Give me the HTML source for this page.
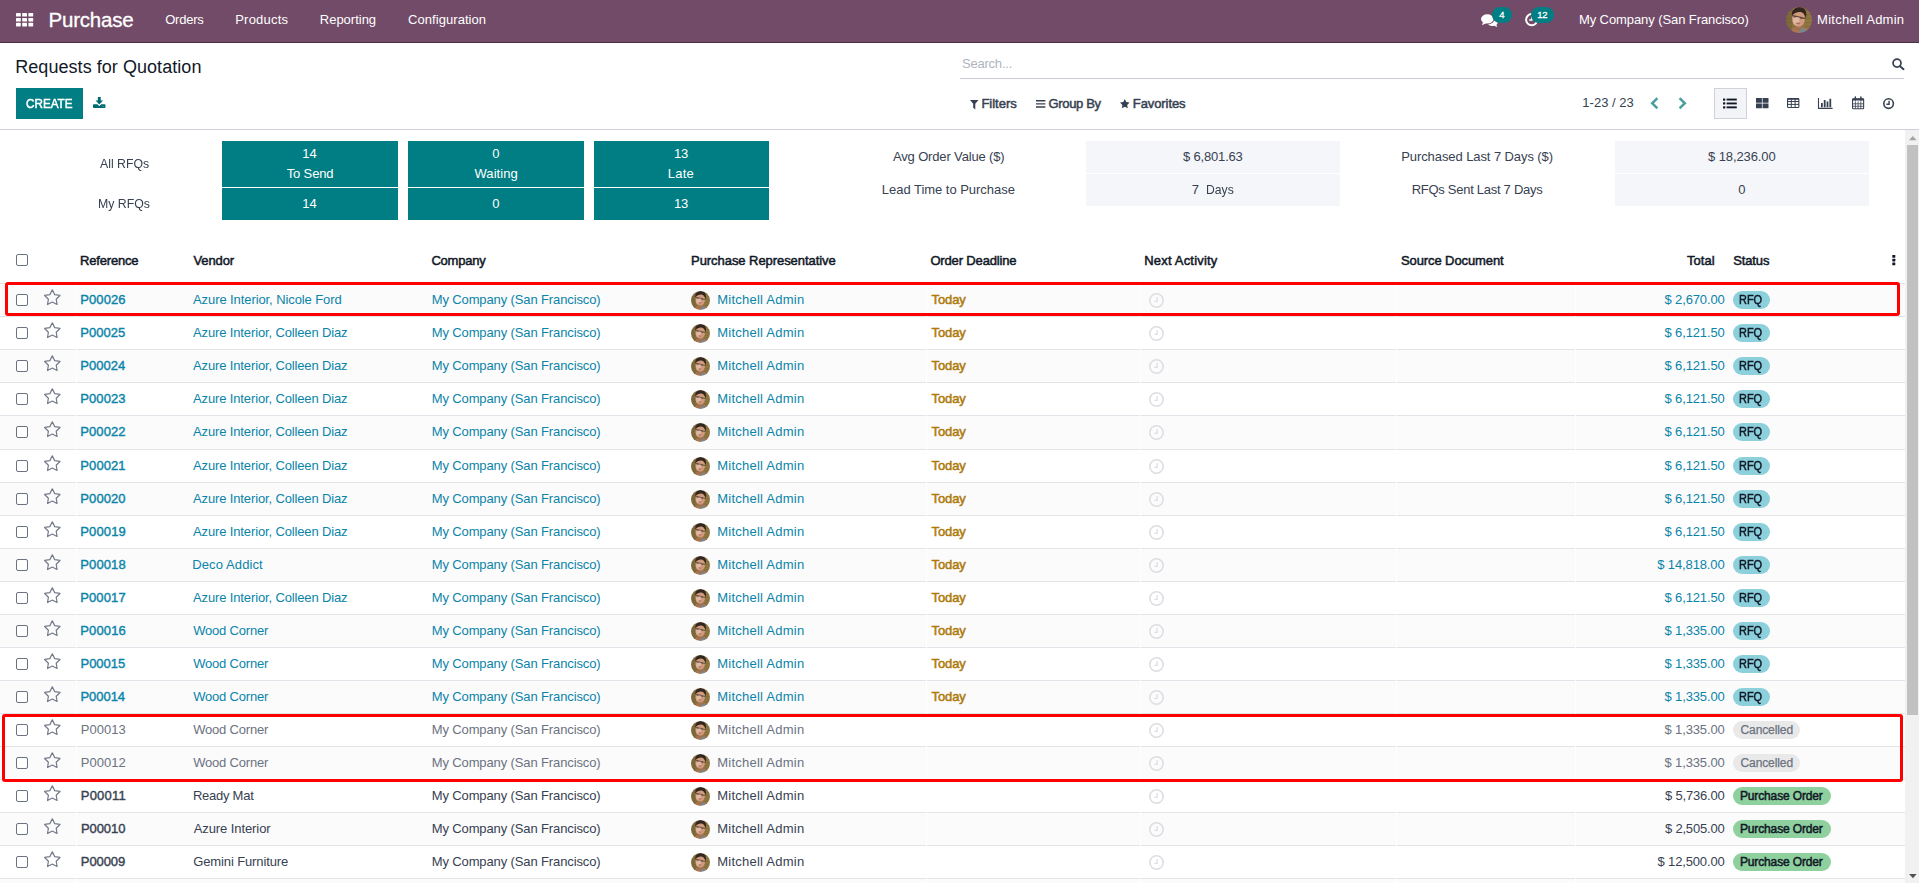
<!DOCTYPE html>
<html lang="en"><head><meta charset="utf-8"><title>Requests for Quotation - Purchase</title>
<style>
html,body{margin:0;padding:0;background:#fff;}
body{width:1919px;height:883px;position:relative;overflow:hidden;font-family:"Liberation Sans", sans-serif;}
.t{position:absolute;white-space:pre;display:block;}
svg{display:block;overflow:visible;}
</style></head><body>
<div style="position:absolute;left:0px;top:0px;width:1919px;height:42px;background:#714b67;"></div>
<div style="position:absolute;left:0px;top:42px;width:1919px;height:1px;background:#4f2e47;"></div>
<svg style="position:absolute;left:16px;top:13.3px;" width="17.2" height="13.4" viewBox="0 0 17.2 13.4"><rect x="0.0" y="0.0" width="4.8" height="3.6" rx="0.6" fill="#fff"/><rect x="6.2" y="0.0" width="4.8" height="3.6" rx="0.6" fill="#fff"/><rect x="12.4" y="0.0" width="4.8" height="3.6" rx="0.6" fill="#fff"/><rect x="0.0" y="4.9" width="4.8" height="3.6" rx="0.6" fill="#fff"/><rect x="6.2" y="4.9" width="4.8" height="3.6" rx="0.6" fill="#fff"/><rect x="12.4" y="4.9" width="4.8" height="3.6" rx="0.6" fill="#fff"/><rect x="0.0" y="9.8" width="4.8" height="3.6" rx="0.6" fill="#fff"/><rect x="6.2" y="9.8" width="4.8" height="3.6" rx="0.6" fill="#fff"/><rect x="12.4" y="9.8" width="4.8" height="3.6" rx="0.6" fill="#fff"/></svg>
<svg style="position:absolute;left:1481px;top:13.5px;" width="17" height="13" viewBox="0 0 17 13"><ellipse cx="6.3" cy="4.9" rx="6.3" ry="4.6" fill="#fff"/><path d="M2 8 L1 11.2 L5.5 9z" fill="#fff"/><path d="M13.5 4.2c2 .7 3.4 2.2 3.4 3.9 0 1.1-.6 2.1-1.5 2.9l.9 2-3-1.200c-.6.100-1.200.200-1.800.200-1.900 0-3.500-.700-4.500-1.800 3.700-.200 6.600-2.500 6.600-5.300 0-.200 0-.500-.100-.700z" fill="#fff"/></svg>
<div style="position:absolute;left:1492.1px;top:6.7px;width:20.2px;height:16.4px;background:#017e84;border-radius:8.2px;"></div>
<svg style="position:absolute;left:1524.5px;top:13px;" width="13.4" height="13.4" viewBox="0 0 13.4 13.4"><circle cx="6.7" cy="6.7" r="5.6" fill="none" stroke="#fff" stroke-width="2"/><path d="M6.9 3.4v3.6H4.200" fill="none" stroke="#fff" stroke-width="1.5"/></svg>
<div style="position:absolute;left:1531.3px;top:6.7px;width:23px;height:16.4px;background:#017e84;border-radius:8.2px;"></div>
<div style="position:absolute;left:1786px;top:7px;width:26px;height:26px;border-radius:50%;overflow:hidden;"><svg width="26" height="26" viewBox="0 0 26 26" style="filter:blur(0.5px)"><rect width="26" height="26" fill="#8f7540"/><path d="M0 3.500h26M0 7.500h26M0 11.500h26M0 15.500h26M0 19.500h26M0 23.500h26" stroke="#7a6334" stroke-width="1.100" opacity=".5"/><path d="M0 0h7l-1 26H0z" fill="#6b5a33" opacity=".45"/><path d="M5 26c0-3.500 2-5.500 5-6.500l6-.500c4 1 6.500 3 7.500 7z" fill="#a87452"/><path d="M13 26l1.500-5.500c4 .500 7 2 8.500 5.500z" fill="#7b8788"/><ellipse cx="12.500" cy="11.800" rx="6.500" ry="8" fill="#cf9b7c"/><ellipse cx="10.300" cy="13.500" rx="3.200" ry="4.200" fill="#e8c9b4" opacity=".65"/><path d="M8 19.500c2.500 2.300 6.500 2.300 9-.300l-.500 2.500c-2.500 1.500-5.500 1.500-8 0z" fill="#9b6a4c" opacity=".6"/><path d="M6 8.500c-.800-5.500 3.500-8.800 8.500-8.300 5.200.500 6.800 5.300 5.300 11.300-.600-3.300-1.800-5.500-4.300-6.300-3.300-.900-7 .300-9.500 3.300z" fill="#33251f"/><path d="M6.300 8.600l6.200 1.200 6.600 1.800" fill="none" stroke="#3a2d2b" stroke-width="1.100" opacity=".8"/><ellipse cx="9" cy="9.800" rx="1.400" ry=".9" fill="#4a3a36" opacity=".6"/><ellipse cx="15.300" cy="11.200" rx="1.400" ry=".9" fill="#4a3a36" opacity=".6"/><ellipse cx="12" cy="16.300" rx="2.300" ry=".9" fill="#b76c6e"/></svg></div>
<div style="position:absolute;left:16px;top:88px;width:67px;height:31px;background:#017e84;"></div>
<svg style="position:absolute;left:93.1px;top:96.9px;" width="12.5" height="11" viewBox="0 0 12.500 11"><rect x="0" y="7.200" width="12.500" height="3.800" rx=".9" fill="#016b72"/><path d="M2.200 3.400h8.200L6.300 8.300z" fill="#fff" stroke="#fff" stroke-width="1.300" stroke-linejoin="round"/><path d="M4.850 0h2.900v3.400h2.300L6.300 7.400 2.550 3.400h2.300z" fill="#016b72"/><circle cx="9.500" cy="9.650" r=".45" fill="#8fd0d3"/><circle cx="10.900" cy="9.650" r=".45" fill="#8fd0d3"/></svg>
<div style="position:absolute;left:960px;top:78px;width:944px;height:1px;background:#c9ccd3;"></div>
<svg style="position:absolute;left:1892px;top:57.9px;" width="12.5" height="12" viewBox="0 0 12.5 12"><circle cx="5" cy="5.100" r="4" fill="none" stroke="#374151" stroke-width="1.700"/><path d="M8 8.200l3.500 3" stroke="#374151" stroke-width="2" stroke-linecap="round"/></svg>
<svg style="position:absolute;left:970px;top:100px;" width="8.5" height="9.5" viewBox="0 0 8.5 9.5"><path d="M0 0h8.500L5.300 3.800v5.700L3.200 7.800v-4z" fill="#374151"/></svg>
<svg style="position:absolute;left:1036.3px;top:100.3px;" width="9.4" height="8" viewBox="0 0 9.400 8"><path d="M0 .1h9.400v1.400H0zM0 3.200h9.400v1.400H0zM0 6.300h9.400v1.400H0z" fill="#374151"/></svg>
<svg style="position:absolute;left:1120.3px;top:99.3px;" width="9.6" height="9.2" viewBox="0 0 9.600 9.200"><path d="M4.800 0l1.480 3.050 3.320.480-2.400 2.370.570 3.300L4.800 7.640 1.830 9.200l.570-3.300L0 3.530l3.320-.48z" fill="#374151"/></svg>
<svg style="position:absolute;left:1650.3px;top:96.5px;" width="9" height="12.5" viewBox="0 0 9 12.5"><path d="M7.400 1.200L2.200 6.250l5.200 5.050" fill="none" stroke="#4b9da0" stroke-width="2.500"/></svg>
<svg style="position:absolute;left:1678px;top:96.5px;" width="9" height="12.5" viewBox="0 0 9 12.5"><path d="M1.600 1.200L6.800 6.250 1.600 11.300" fill="none" stroke="#4b9da0" stroke-width="2.500"/></svg>
<div style="position:absolute;left:1714px;top:88px;width:33px;height:31px;background:#f3f4f8;border:1px solid #cfd2d8;box-sizing:border-box;"></div>
<svg style="position:absolute;left:1723.3px;top:98.1px;" width="13.8" height="10.6" viewBox="0 0 13.800 10.600"><rect x="0" y="0.4" width="2.300" height="2.300" rx="0.600" fill="#111827"/><rect x="3.600" y="0.6" width="10.200" height="1.900" fill="#111827"/><rect x="0" y="4.3" width="2.300" height="2.300" rx="0.600" fill="#111827"/><rect x="3.600" y="4.5" width="10.200" height="1.900" fill="#111827"/><rect x="0" y="8.2" width="2.300" height="2.300" rx="0.600" fill="#111827"/><rect x="3.600" y="8.4" width="10.200" height="1.900" fill="#111827"/></svg>
<svg style="position:absolute;left:1755.5px;top:97.7px;" width="12.5" height="10.2" viewBox="0 0 12.500 10.200"><path d="M0 0h5.900v4.800H0zM6.600 0h5.900v4.800H6.600zM0 5.400h5.900v4.800H0zM6.600 5.400h5.900v4.800H6.600z" fill="#374151"/></svg>
<svg style="position:absolute;left:1786.7px;top:97.9px;" width="12.4" height="10" viewBox="0 0 12.400 10"><rect x=".55" y=".55" width="11.300" height="8.900" rx=".8" fill="none" stroke="#374151" stroke-width="1.100"/><path d="M.5 3.500h11.400M.5 6.400h11.400M4.300 1v8.500M8.100 1v8.500" stroke="#374151" stroke-width="1" fill="none"/><rect x=".5" y=".5" width="11.400" height="1.300" fill="#374151"/></svg>
<svg style="position:absolute;left:1818.2px;top:98px;" width="14.6" height="11" viewBox="0 0 14.600 11"><path d="M.5 0v10.400h14.100" fill="none" stroke="#374151" stroke-width="1.100"/><path d="M3 5h1.800v4.300H3zM5.800 1.900h1.800v7.400H5.800zM8.600 3.500h1.800v5.800H8.600zM11.400 .800h1.800v8.500h-1.800z" fill="#374151"/></svg>
<svg style="position:absolute;left:1851.9px;top:97.3px;" width="12.2" height="12.3" viewBox="0 0 12.200 12.300"><rect x=".55" y="1.700" width="11.100" height="10" rx=".7" fill="none" stroke="#374151" stroke-width="1.100"/><rect x=".5" y="1.700" width="11.200" height="1.800" fill="#374151"/><path d="M3.300 0v3M8.900 0v3" stroke="#374151" stroke-width="1.500" stroke-linecap="round"/><path d="M.5 6.800h11.200M.5 9.300h11.200M3.400 4.300v7.400M6.100 4.300v7.400M8.800 4.300v7.400" stroke="#374151" stroke-width=".8"/></svg>
<svg style="position:absolute;left:1882.6px;top:97.7px;" width="11.2" height="11.2" viewBox="0 0 11.200 11.200"><circle cx="5.600" cy="5.600" r="4.800" fill="none" stroke="#374151" stroke-width="1.600"/><path d="M6.100 2.800v3.400H3.400" fill="none" stroke="#374151" stroke-width="1.400"/></svg>
<div style="position:absolute;left:0px;top:129px;width:1919px;height:1px;background:#ced1d8;"></div>
<div style="position:absolute;left:222px;top:141px;width:176px;height:46px;background:#017e84;"></div>
<div style="position:absolute;left:222px;top:188px;width:176px;height:32px;background:#017e84;"></div>
<div style="position:absolute;left:408px;top:141px;width:176px;height:46px;background:#017e84;"></div>
<div style="position:absolute;left:408px;top:188px;width:176px;height:32px;background:#017e84;"></div>
<div style="position:absolute;left:594px;top:141px;width:175px;height:46px;background:#017e84;"></div>
<div style="position:absolute;left:594px;top:188px;width:175px;height:32px;background:#017e84;"></div>
<div style="position:absolute;left:1086px;top:141px;width:254px;height:32px;background:#f5f6fa;"></div>
<div style="position:absolute;left:1086px;top:174px;width:254px;height:32px;background:#f5f6fa;"></div>
<div style="position:absolute;left:1615px;top:141px;width:254px;height:32px;background:#f5f6fa;"></div>
<div style="position:absolute;left:1615px;top:174px;width:254px;height:32px;background:#f5f6fa;"></div>
<div style="position:absolute;left:16px;top:254px;width:12px;height:12px;box-sizing:border-box;border:1px solid #6b7280;border-radius:2px;background:#fff;"></div>
<svg style="position:absolute;left:1892px;top:255.3px;" width="3.6" height="10.2" viewBox="0 0 3.600 10.200"><rect x=".3" y="0" width="3" height="2.700" rx=".5" fill="#111827"/><rect x=".3" y="3.750" width="3" height="2.700" rx=".5" fill="#111827"/><rect x=".3" y="7.500" width="3" height="2.700" rx=".5" fill="#111827"/></svg>
<div style="position:absolute;left:0px;top:283px;width:1905px;height:1px;background:#e2e4e9;"></div>
<div style="position:absolute;left:0px;top:284px;width:1905px;height:32px;background:#fbfbfc;"></div>
<div style="position:absolute;left:16px;top:294px;width:12px;height:12px;box-sizing:border-box;border:1px solid #6b7280;border-radius:2px;background:#fff;"></div>
<svg style="position:absolute;left:42px;top:287.2px;" width="20" height="20" viewBox="0 0 20 20"><path d="M10.30 2.85L12.71 7.63L18.00 8.45L14.20 12.22L15.06 17.50L10.30 15.05L5.54 17.50L6.40 12.22L2.60 8.45L7.89 7.63z" fill="none" stroke="#737a88" stroke-width="1.200" stroke-linejoin="round"/></svg>
<div style="position:absolute;left:690.8px;top:290.9px;width:19.2px;height:19.2px;border-radius:50%;overflow:hidden;"><svg width="19.2" height="19.2" viewBox="0 0 26 26" style="filter:blur(0.35px)"><rect width="26" height="26" fill="#8f7540"/><path d="M0 3.500h26M0 7.500h26M0 11.500h26M0 15.500h26M0 19.500h26M0 23.500h26" stroke="#7a6334" stroke-width="1.100" opacity=".5"/><path d="M0 0h7l-1 26H0z" fill="#6b5a33" opacity=".45"/><path d="M5 26c0-3.500 2-5.500 5-6.500l6-.500c4 1 6.500 3 7.500 7z" fill="#a87452"/><path d="M13 26l1.500-5.500c4 .500 7 2 8.500 5.500z" fill="#7b8788"/><ellipse cx="12.500" cy="11.800" rx="6.500" ry="8" fill="#cf9b7c"/><ellipse cx="10.300" cy="13.500" rx="3.200" ry="4.200" fill="#e8c9b4" opacity=".65"/><path d="M8 19.500c2.500 2.300 6.500 2.300 9-.300l-.500 2.500c-2.500 1.500-5.500 1.500-8 0z" fill="#9b6a4c" opacity=".6"/><path d="M6 8.500c-.800-5.500 3.500-8.800 8.500-8.300 5.200.500 6.800 5.300 5.300 11.300-.600-3.300-1.800-5.500-4.300-6.300-3.300-.900-7 .300-9.500 3.300z" fill="#33251f"/><path d="M6.300 8.600l6.200 1.200 6.600 1.800" fill="none" stroke="#3a2d2b" stroke-width="1.100" opacity=".8"/><ellipse cx="9" cy="9.800" rx="1.400" ry=".9" fill="#4a3a36" opacity=".6"/><ellipse cx="15.300" cy="11.200" rx="1.400" ry=".9" fill="#4a3a36" opacity=".6"/><ellipse cx="12" cy="16.300" rx="2.300" ry=".9" fill="#b76c6e"/></svg></div>
<svg style="position:absolute;left:1148.7px;top:293.2px;" width="15" height="15" viewBox="0 0 15 15"><circle cx="7.500" cy="7.500" r="6.700" fill="none" stroke="#dcdee3" stroke-width="1.600"/><path d="M8.100 4v4.300H5.400" fill="none" stroke="#dcdee3" stroke-width="1.300"/></svg>
<div style="position:absolute;left:1733px;top:291px;width:37px;height:18px;background:#8bd0db;border-radius:9px;"></div>
<div style="position:absolute;left:0px;top:316px;width:1905px;height:1px;background:#e2e4e9;"></div>
<div style="position:absolute;left:0px;top:317px;width:1905px;height:32px;background:#fff;"></div>
<div style="position:absolute;left:16px;top:327px;width:12px;height:12px;box-sizing:border-box;border:1px solid #6b7280;border-radius:2px;background:#fff;"></div>
<svg style="position:absolute;left:42px;top:320.2px;" width="20" height="20" viewBox="0 0 20 20"><path d="M10.30 2.85L12.71 7.63L18.00 8.45L14.20 12.22L15.06 17.50L10.30 15.05L5.54 17.50L6.40 12.22L2.60 8.45L7.89 7.63z" fill="none" stroke="#737a88" stroke-width="1.200" stroke-linejoin="round"/></svg>
<div style="position:absolute;left:690.8px;top:323.9px;width:19.2px;height:19.2px;border-radius:50%;overflow:hidden;"><svg width="19.2" height="19.2" viewBox="0 0 26 26" style="filter:blur(0.35px)"><rect width="26" height="26" fill="#8f7540"/><path d="M0 3.500h26M0 7.500h26M0 11.500h26M0 15.500h26M0 19.500h26M0 23.500h26" stroke="#7a6334" stroke-width="1.100" opacity=".5"/><path d="M0 0h7l-1 26H0z" fill="#6b5a33" opacity=".45"/><path d="M5 26c0-3.500 2-5.500 5-6.500l6-.500c4 1 6.500 3 7.500 7z" fill="#a87452"/><path d="M13 26l1.500-5.500c4 .500 7 2 8.500 5.500z" fill="#7b8788"/><ellipse cx="12.500" cy="11.800" rx="6.500" ry="8" fill="#cf9b7c"/><ellipse cx="10.300" cy="13.500" rx="3.200" ry="4.200" fill="#e8c9b4" opacity=".65"/><path d="M8 19.500c2.500 2.300 6.500 2.300 9-.300l-.500 2.500c-2.500 1.500-5.500 1.500-8 0z" fill="#9b6a4c" opacity=".6"/><path d="M6 8.500c-.800-5.500 3.500-8.800 8.500-8.300 5.200.500 6.800 5.300 5.300 11.300-.600-3.300-1.800-5.500-4.300-6.300-3.300-.900-7 .300-9.500 3.300z" fill="#33251f"/><path d="M6.300 8.600l6.200 1.200 6.600 1.800" fill="none" stroke="#3a2d2b" stroke-width="1.100" opacity=".8"/><ellipse cx="9" cy="9.800" rx="1.400" ry=".9" fill="#4a3a36" opacity=".6"/><ellipse cx="15.300" cy="11.200" rx="1.400" ry=".9" fill="#4a3a36" opacity=".6"/><ellipse cx="12" cy="16.300" rx="2.300" ry=".9" fill="#b76c6e"/></svg></div>
<svg style="position:absolute;left:1148.7px;top:326.2px;" width="15" height="15" viewBox="0 0 15 15"><circle cx="7.500" cy="7.500" r="6.700" fill="none" stroke="#dcdee3" stroke-width="1.600"/><path d="M8.100 4v4.300H5.400" fill="none" stroke="#dcdee3" stroke-width="1.300"/></svg>
<div style="position:absolute;left:1733px;top:324px;width:37px;height:18px;background:#8bd0db;border-radius:9px;"></div>
<div style="position:absolute;left:0px;top:349px;width:1905px;height:1px;background:#e2e4e9;"></div>
<div style="position:absolute;left:0px;top:350px;width:1905px;height:32px;background:#fbfbfc;"></div>
<div style="position:absolute;left:16px;top:360px;width:12px;height:12px;box-sizing:border-box;border:1px solid #6b7280;border-radius:2px;background:#fff;"></div>
<svg style="position:absolute;left:42px;top:353.2px;" width="20" height="20" viewBox="0 0 20 20"><path d="M10.30 2.85L12.71 7.63L18.00 8.45L14.20 12.22L15.06 17.50L10.30 15.05L5.54 17.50L6.40 12.22L2.60 8.45L7.89 7.63z" fill="none" stroke="#737a88" stroke-width="1.200" stroke-linejoin="round"/></svg>
<div style="position:absolute;left:690.8px;top:356.9px;width:19.2px;height:19.2px;border-radius:50%;overflow:hidden;"><svg width="19.2" height="19.2" viewBox="0 0 26 26" style="filter:blur(0.35px)"><rect width="26" height="26" fill="#8f7540"/><path d="M0 3.500h26M0 7.500h26M0 11.500h26M0 15.500h26M0 19.500h26M0 23.500h26" stroke="#7a6334" stroke-width="1.100" opacity=".5"/><path d="M0 0h7l-1 26H0z" fill="#6b5a33" opacity=".45"/><path d="M5 26c0-3.500 2-5.500 5-6.500l6-.500c4 1 6.500 3 7.500 7z" fill="#a87452"/><path d="M13 26l1.500-5.500c4 .500 7 2 8.500 5.500z" fill="#7b8788"/><ellipse cx="12.500" cy="11.800" rx="6.500" ry="8" fill="#cf9b7c"/><ellipse cx="10.300" cy="13.500" rx="3.200" ry="4.200" fill="#e8c9b4" opacity=".65"/><path d="M8 19.500c2.500 2.300 6.500 2.300 9-.300l-.500 2.500c-2.500 1.500-5.500 1.500-8 0z" fill="#9b6a4c" opacity=".6"/><path d="M6 8.500c-.800-5.500 3.500-8.800 8.500-8.300 5.200.500 6.800 5.300 5.300 11.300-.600-3.300-1.800-5.500-4.300-6.300-3.300-.900-7 .300-9.500 3.300z" fill="#33251f"/><path d="M6.300 8.600l6.200 1.200 6.600 1.800" fill="none" stroke="#3a2d2b" stroke-width="1.100" opacity=".8"/><ellipse cx="9" cy="9.800" rx="1.400" ry=".9" fill="#4a3a36" opacity=".6"/><ellipse cx="15.300" cy="11.200" rx="1.400" ry=".9" fill="#4a3a36" opacity=".6"/><ellipse cx="12" cy="16.300" rx="2.300" ry=".9" fill="#b76c6e"/></svg></div>
<svg style="position:absolute;left:1148.7px;top:359.2px;" width="15" height="15" viewBox="0 0 15 15"><circle cx="7.500" cy="7.500" r="6.700" fill="none" stroke="#dcdee3" stroke-width="1.600"/><path d="M8.100 4v4.300H5.400" fill="none" stroke="#dcdee3" stroke-width="1.300"/></svg>
<div style="position:absolute;left:1733px;top:357px;width:37px;height:18px;background:#8bd0db;border-radius:9px;"></div>
<div style="position:absolute;left:0px;top:382px;width:1905px;height:1px;background:#e2e4e9;"></div>
<div style="position:absolute;left:0px;top:383px;width:1905px;height:32px;background:#fff;"></div>
<div style="position:absolute;left:16px;top:393px;width:12px;height:12px;box-sizing:border-box;border:1px solid #6b7280;border-radius:2px;background:#fff;"></div>
<svg style="position:absolute;left:42px;top:386.2px;" width="20" height="20" viewBox="0 0 20 20"><path d="M10.30 2.85L12.71 7.63L18.00 8.45L14.20 12.22L15.06 17.50L10.30 15.05L5.54 17.50L6.40 12.22L2.60 8.45L7.89 7.63z" fill="none" stroke="#737a88" stroke-width="1.200" stroke-linejoin="round"/></svg>
<div style="position:absolute;left:690.8px;top:389.9px;width:19.2px;height:19.2px;border-radius:50%;overflow:hidden;"><svg width="19.2" height="19.2" viewBox="0 0 26 26" style="filter:blur(0.35px)"><rect width="26" height="26" fill="#8f7540"/><path d="M0 3.500h26M0 7.500h26M0 11.500h26M0 15.500h26M0 19.500h26M0 23.500h26" stroke="#7a6334" stroke-width="1.100" opacity=".5"/><path d="M0 0h7l-1 26H0z" fill="#6b5a33" opacity=".45"/><path d="M5 26c0-3.500 2-5.500 5-6.500l6-.500c4 1 6.500 3 7.500 7z" fill="#a87452"/><path d="M13 26l1.500-5.500c4 .500 7 2 8.500 5.500z" fill="#7b8788"/><ellipse cx="12.500" cy="11.800" rx="6.500" ry="8" fill="#cf9b7c"/><ellipse cx="10.300" cy="13.500" rx="3.200" ry="4.200" fill="#e8c9b4" opacity=".65"/><path d="M8 19.500c2.500 2.300 6.500 2.300 9-.300l-.500 2.500c-2.500 1.500-5.500 1.500-8 0z" fill="#9b6a4c" opacity=".6"/><path d="M6 8.500c-.800-5.500 3.500-8.800 8.500-8.300 5.200.500 6.800 5.300 5.300 11.300-.600-3.300-1.800-5.500-4.300-6.300-3.300-.900-7 .300-9.500 3.300z" fill="#33251f"/><path d="M6.300 8.600l6.200 1.200 6.600 1.800" fill="none" stroke="#3a2d2b" stroke-width="1.100" opacity=".8"/><ellipse cx="9" cy="9.800" rx="1.400" ry=".9" fill="#4a3a36" opacity=".6"/><ellipse cx="15.300" cy="11.200" rx="1.400" ry=".9" fill="#4a3a36" opacity=".6"/><ellipse cx="12" cy="16.300" rx="2.300" ry=".9" fill="#b76c6e"/></svg></div>
<svg style="position:absolute;left:1148.7px;top:392.2px;" width="15" height="15" viewBox="0 0 15 15"><circle cx="7.500" cy="7.500" r="6.700" fill="none" stroke="#dcdee3" stroke-width="1.600"/><path d="M8.100 4v4.300H5.400" fill="none" stroke="#dcdee3" stroke-width="1.300"/></svg>
<div style="position:absolute;left:1733px;top:390px;width:37px;height:18px;background:#8bd0db;border-radius:9px;"></div>
<div style="position:absolute;left:0px;top:415px;width:1905px;height:1px;background:#e2e4e9;"></div>
<div style="position:absolute;left:0px;top:416px;width:1905px;height:33px;background:#fbfbfc;"></div>
<div style="position:absolute;left:16px;top:426px;width:12px;height:12px;box-sizing:border-box;border:1px solid #6b7280;border-radius:2px;background:#fff;"></div>
<svg style="position:absolute;left:42px;top:419.2px;" width="20" height="20" viewBox="0 0 20 20"><path d="M10.30 2.85L12.71 7.63L18.00 8.45L14.20 12.22L15.06 17.50L10.30 15.05L5.54 17.50L6.40 12.22L2.60 8.45L7.89 7.63z" fill="none" stroke="#737a88" stroke-width="1.200" stroke-linejoin="round"/></svg>
<div style="position:absolute;left:690.8px;top:422.9px;width:19.2px;height:19.2px;border-radius:50%;overflow:hidden;"><svg width="19.2" height="19.2" viewBox="0 0 26 26" style="filter:blur(0.35px)"><rect width="26" height="26" fill="#8f7540"/><path d="M0 3.500h26M0 7.500h26M0 11.500h26M0 15.500h26M0 19.500h26M0 23.500h26" stroke="#7a6334" stroke-width="1.100" opacity=".5"/><path d="M0 0h7l-1 26H0z" fill="#6b5a33" opacity=".45"/><path d="M5 26c0-3.500 2-5.500 5-6.500l6-.500c4 1 6.500 3 7.500 7z" fill="#a87452"/><path d="M13 26l1.500-5.500c4 .500 7 2 8.500 5.500z" fill="#7b8788"/><ellipse cx="12.500" cy="11.800" rx="6.500" ry="8" fill="#cf9b7c"/><ellipse cx="10.300" cy="13.500" rx="3.200" ry="4.200" fill="#e8c9b4" opacity=".65"/><path d="M8 19.500c2.500 2.300 6.500 2.300 9-.300l-.500 2.500c-2.500 1.500-5.500 1.500-8 0z" fill="#9b6a4c" opacity=".6"/><path d="M6 8.500c-.800-5.500 3.500-8.800 8.500-8.300 5.200.500 6.800 5.300 5.300 11.300-.600-3.300-1.800-5.500-4.300-6.300-3.300-.900-7 .300-9.500 3.300z" fill="#33251f"/><path d="M6.300 8.600l6.200 1.200 6.600 1.800" fill="none" stroke="#3a2d2b" stroke-width="1.100" opacity=".8"/><ellipse cx="9" cy="9.800" rx="1.400" ry=".9" fill="#4a3a36" opacity=".6"/><ellipse cx="15.300" cy="11.200" rx="1.400" ry=".9" fill="#4a3a36" opacity=".6"/><ellipse cx="12" cy="16.300" rx="2.300" ry=".9" fill="#b76c6e"/></svg></div>
<svg style="position:absolute;left:1148.7px;top:425.2px;" width="15" height="15" viewBox="0 0 15 15"><circle cx="7.500" cy="7.500" r="6.700" fill="none" stroke="#dcdee3" stroke-width="1.600"/><path d="M8.100 4v4.300H5.400" fill="none" stroke="#dcdee3" stroke-width="1.300"/></svg>
<div style="position:absolute;left:1733px;top:423px;width:37px;height:18px;background:#8bd0db;border-radius:9px;"></div>
<div style="position:absolute;left:0px;top:449px;width:1905px;height:1px;background:#e2e4e9;"></div>
<div style="position:absolute;left:0px;top:450px;width:1905px;height:32px;background:#fff;"></div>
<div style="position:absolute;left:16px;top:460px;width:12px;height:12px;box-sizing:border-box;border:1px solid #6b7280;border-radius:2px;background:#fff;"></div>
<svg style="position:absolute;left:42px;top:453.2px;" width="20" height="20" viewBox="0 0 20 20"><path d="M10.30 2.85L12.71 7.63L18.00 8.45L14.20 12.22L15.06 17.50L10.30 15.05L5.54 17.50L6.40 12.22L2.60 8.45L7.89 7.63z" fill="none" stroke="#737a88" stroke-width="1.200" stroke-linejoin="round"/></svg>
<div style="position:absolute;left:690.8px;top:456.9px;width:19.2px;height:19.2px;border-radius:50%;overflow:hidden;"><svg width="19.2" height="19.2" viewBox="0 0 26 26" style="filter:blur(0.35px)"><rect width="26" height="26" fill="#8f7540"/><path d="M0 3.500h26M0 7.500h26M0 11.500h26M0 15.500h26M0 19.500h26M0 23.500h26" stroke="#7a6334" stroke-width="1.100" opacity=".5"/><path d="M0 0h7l-1 26H0z" fill="#6b5a33" opacity=".45"/><path d="M5 26c0-3.500 2-5.500 5-6.500l6-.500c4 1 6.500 3 7.500 7z" fill="#a87452"/><path d="M13 26l1.500-5.500c4 .500 7 2 8.500 5.500z" fill="#7b8788"/><ellipse cx="12.500" cy="11.800" rx="6.500" ry="8" fill="#cf9b7c"/><ellipse cx="10.300" cy="13.500" rx="3.200" ry="4.200" fill="#e8c9b4" opacity=".65"/><path d="M8 19.500c2.500 2.300 6.500 2.300 9-.300l-.500 2.500c-2.500 1.500-5.500 1.500-8 0z" fill="#9b6a4c" opacity=".6"/><path d="M6 8.500c-.800-5.500 3.500-8.800 8.500-8.300 5.200.500 6.800 5.300 5.300 11.300-.600-3.300-1.800-5.500-4.300-6.300-3.300-.900-7 .300-9.500 3.300z" fill="#33251f"/><path d="M6.300 8.600l6.200 1.200 6.600 1.800" fill="none" stroke="#3a2d2b" stroke-width="1.100" opacity=".8"/><ellipse cx="9" cy="9.800" rx="1.400" ry=".9" fill="#4a3a36" opacity=".6"/><ellipse cx="15.300" cy="11.200" rx="1.400" ry=".9" fill="#4a3a36" opacity=".6"/><ellipse cx="12" cy="16.300" rx="2.300" ry=".9" fill="#b76c6e"/></svg></div>
<svg style="position:absolute;left:1148.7px;top:459.2px;" width="15" height="15" viewBox="0 0 15 15"><circle cx="7.500" cy="7.500" r="6.700" fill="none" stroke="#dcdee3" stroke-width="1.600"/><path d="M8.100 4v4.300H5.400" fill="none" stroke="#dcdee3" stroke-width="1.300"/></svg>
<div style="position:absolute;left:1733px;top:457px;width:37px;height:18px;background:#8bd0db;border-radius:9px;"></div>
<div style="position:absolute;left:0px;top:482px;width:1905px;height:1px;background:#e2e4e9;"></div>
<div style="position:absolute;left:0px;top:483px;width:1905px;height:32px;background:#fbfbfc;"></div>
<div style="position:absolute;left:16px;top:493px;width:12px;height:12px;box-sizing:border-box;border:1px solid #6b7280;border-radius:2px;background:#fff;"></div>
<svg style="position:absolute;left:42px;top:486.2px;" width="20" height="20" viewBox="0 0 20 20"><path d="M10.30 2.85L12.71 7.63L18.00 8.45L14.20 12.22L15.06 17.50L10.30 15.05L5.54 17.50L6.40 12.22L2.60 8.45L7.89 7.63z" fill="none" stroke="#737a88" stroke-width="1.200" stroke-linejoin="round"/></svg>
<div style="position:absolute;left:690.8px;top:489.9px;width:19.2px;height:19.2px;border-radius:50%;overflow:hidden;"><svg width="19.2" height="19.2" viewBox="0 0 26 26" style="filter:blur(0.35px)"><rect width="26" height="26" fill="#8f7540"/><path d="M0 3.500h26M0 7.500h26M0 11.500h26M0 15.500h26M0 19.500h26M0 23.500h26" stroke="#7a6334" stroke-width="1.100" opacity=".5"/><path d="M0 0h7l-1 26H0z" fill="#6b5a33" opacity=".45"/><path d="M5 26c0-3.500 2-5.500 5-6.500l6-.500c4 1 6.500 3 7.500 7z" fill="#a87452"/><path d="M13 26l1.500-5.500c4 .500 7 2 8.500 5.500z" fill="#7b8788"/><ellipse cx="12.500" cy="11.800" rx="6.500" ry="8" fill="#cf9b7c"/><ellipse cx="10.300" cy="13.500" rx="3.200" ry="4.200" fill="#e8c9b4" opacity=".65"/><path d="M8 19.500c2.500 2.300 6.500 2.300 9-.300l-.500 2.500c-2.500 1.500-5.500 1.500-8 0z" fill="#9b6a4c" opacity=".6"/><path d="M6 8.500c-.800-5.500 3.500-8.800 8.500-8.300 5.200.500 6.800 5.300 5.300 11.300-.600-3.300-1.800-5.500-4.300-6.300-3.300-.900-7 .300-9.500 3.300z" fill="#33251f"/><path d="M6.300 8.600l6.200 1.200 6.600 1.800" fill="none" stroke="#3a2d2b" stroke-width="1.100" opacity=".8"/><ellipse cx="9" cy="9.800" rx="1.400" ry=".9" fill="#4a3a36" opacity=".6"/><ellipse cx="15.300" cy="11.200" rx="1.400" ry=".9" fill="#4a3a36" opacity=".6"/><ellipse cx="12" cy="16.300" rx="2.300" ry=".9" fill="#b76c6e"/></svg></div>
<svg style="position:absolute;left:1148.7px;top:492.2px;" width="15" height="15" viewBox="0 0 15 15"><circle cx="7.500" cy="7.500" r="6.700" fill="none" stroke="#dcdee3" stroke-width="1.600"/><path d="M8.100 4v4.300H5.400" fill="none" stroke="#dcdee3" stroke-width="1.300"/></svg>
<div style="position:absolute;left:1733px;top:490px;width:37px;height:18px;background:#8bd0db;border-radius:9px;"></div>
<div style="position:absolute;left:0px;top:515px;width:1905px;height:1px;background:#e2e4e9;"></div>
<div style="position:absolute;left:0px;top:516px;width:1905px;height:32px;background:#fff;"></div>
<div style="position:absolute;left:16px;top:526px;width:12px;height:12px;box-sizing:border-box;border:1px solid #6b7280;border-radius:2px;background:#fff;"></div>
<svg style="position:absolute;left:42px;top:519.2px;" width="20" height="20" viewBox="0 0 20 20"><path d="M10.30 2.85L12.71 7.63L18.00 8.45L14.20 12.22L15.06 17.50L10.30 15.05L5.54 17.50L6.40 12.22L2.60 8.45L7.89 7.63z" fill="none" stroke="#737a88" stroke-width="1.200" stroke-linejoin="round"/></svg>
<div style="position:absolute;left:690.8px;top:522.9px;width:19.2px;height:19.2px;border-radius:50%;overflow:hidden;"><svg width="19.2" height="19.2" viewBox="0 0 26 26" style="filter:blur(0.35px)"><rect width="26" height="26" fill="#8f7540"/><path d="M0 3.500h26M0 7.500h26M0 11.500h26M0 15.500h26M0 19.500h26M0 23.500h26" stroke="#7a6334" stroke-width="1.100" opacity=".5"/><path d="M0 0h7l-1 26H0z" fill="#6b5a33" opacity=".45"/><path d="M5 26c0-3.500 2-5.500 5-6.500l6-.500c4 1 6.500 3 7.500 7z" fill="#a87452"/><path d="M13 26l1.500-5.500c4 .500 7 2 8.500 5.500z" fill="#7b8788"/><ellipse cx="12.500" cy="11.800" rx="6.500" ry="8" fill="#cf9b7c"/><ellipse cx="10.300" cy="13.500" rx="3.200" ry="4.200" fill="#e8c9b4" opacity=".65"/><path d="M8 19.500c2.500 2.300 6.500 2.300 9-.300l-.500 2.500c-2.500 1.500-5.500 1.500-8 0z" fill="#9b6a4c" opacity=".6"/><path d="M6 8.500c-.800-5.500 3.500-8.800 8.500-8.300 5.200.500 6.800 5.300 5.300 11.300-.600-3.300-1.800-5.500-4.300-6.300-3.300-.900-7 .300-9.500 3.300z" fill="#33251f"/><path d="M6.300 8.600l6.200 1.200 6.600 1.800" fill="none" stroke="#3a2d2b" stroke-width="1.100" opacity=".8"/><ellipse cx="9" cy="9.800" rx="1.400" ry=".9" fill="#4a3a36" opacity=".6"/><ellipse cx="15.300" cy="11.200" rx="1.400" ry=".9" fill="#4a3a36" opacity=".6"/><ellipse cx="12" cy="16.300" rx="2.300" ry=".9" fill="#b76c6e"/></svg></div>
<svg style="position:absolute;left:1148.7px;top:525.2px;" width="15" height="15" viewBox="0 0 15 15"><circle cx="7.500" cy="7.500" r="6.700" fill="none" stroke="#dcdee3" stroke-width="1.600"/><path d="M8.100 4v4.300H5.400" fill="none" stroke="#dcdee3" stroke-width="1.300"/></svg>
<div style="position:absolute;left:1733px;top:523px;width:37px;height:18px;background:#8bd0db;border-radius:9px;"></div>
<div style="position:absolute;left:0px;top:548px;width:1905px;height:1px;background:#e2e4e9;"></div>
<div style="position:absolute;left:0px;top:549px;width:1905px;height:32px;background:#fbfbfc;"></div>
<div style="position:absolute;left:16px;top:559px;width:12px;height:12px;box-sizing:border-box;border:1px solid #6b7280;border-radius:2px;background:#fff;"></div>
<svg style="position:absolute;left:42px;top:552.2px;" width="20" height="20" viewBox="0 0 20 20"><path d="M10.30 2.85L12.71 7.63L18.00 8.45L14.20 12.22L15.06 17.50L10.30 15.05L5.54 17.50L6.40 12.22L2.60 8.45L7.89 7.63z" fill="none" stroke="#737a88" stroke-width="1.200" stroke-linejoin="round"/></svg>
<div style="position:absolute;left:690.8px;top:555.9px;width:19.2px;height:19.2px;border-radius:50%;overflow:hidden;"><svg width="19.2" height="19.2" viewBox="0 0 26 26" style="filter:blur(0.35px)"><rect width="26" height="26" fill="#8f7540"/><path d="M0 3.500h26M0 7.500h26M0 11.500h26M0 15.500h26M0 19.500h26M0 23.500h26" stroke="#7a6334" stroke-width="1.100" opacity=".5"/><path d="M0 0h7l-1 26H0z" fill="#6b5a33" opacity=".45"/><path d="M5 26c0-3.500 2-5.500 5-6.500l6-.500c4 1 6.500 3 7.500 7z" fill="#a87452"/><path d="M13 26l1.500-5.500c4 .500 7 2 8.500 5.500z" fill="#7b8788"/><ellipse cx="12.500" cy="11.800" rx="6.500" ry="8" fill="#cf9b7c"/><ellipse cx="10.300" cy="13.500" rx="3.200" ry="4.200" fill="#e8c9b4" opacity=".65"/><path d="M8 19.500c2.500 2.300 6.500 2.300 9-.300l-.500 2.500c-2.500 1.500-5.500 1.500-8 0z" fill="#9b6a4c" opacity=".6"/><path d="M6 8.500c-.800-5.500 3.500-8.800 8.500-8.300 5.200.500 6.800 5.300 5.300 11.300-.600-3.300-1.800-5.500-4.300-6.300-3.300-.900-7 .300-9.500 3.300z" fill="#33251f"/><path d="M6.300 8.600l6.200 1.200 6.600 1.800" fill="none" stroke="#3a2d2b" stroke-width="1.100" opacity=".8"/><ellipse cx="9" cy="9.800" rx="1.400" ry=".9" fill="#4a3a36" opacity=".6"/><ellipse cx="15.300" cy="11.200" rx="1.400" ry=".9" fill="#4a3a36" opacity=".6"/><ellipse cx="12" cy="16.300" rx="2.300" ry=".9" fill="#b76c6e"/></svg></div>
<svg style="position:absolute;left:1148.7px;top:558.2px;" width="15" height="15" viewBox="0 0 15 15"><circle cx="7.500" cy="7.500" r="6.700" fill="none" stroke="#dcdee3" stroke-width="1.600"/><path d="M8.100 4v4.300H5.400" fill="none" stroke="#dcdee3" stroke-width="1.300"/></svg>
<div style="position:absolute;left:1733px;top:556px;width:37px;height:18px;background:#8bd0db;border-radius:9px;"></div>
<div style="position:absolute;left:0px;top:581px;width:1905px;height:1px;background:#e2e4e9;"></div>
<div style="position:absolute;left:0px;top:582px;width:1905px;height:32px;background:#fff;"></div>
<div style="position:absolute;left:16px;top:592px;width:12px;height:12px;box-sizing:border-box;border:1px solid #6b7280;border-radius:2px;background:#fff;"></div>
<svg style="position:absolute;left:42px;top:585.2px;" width="20" height="20" viewBox="0 0 20 20"><path d="M10.30 2.85L12.71 7.63L18.00 8.45L14.20 12.22L15.06 17.50L10.30 15.05L5.54 17.50L6.40 12.22L2.60 8.45L7.89 7.63z" fill="none" stroke="#737a88" stroke-width="1.200" stroke-linejoin="round"/></svg>
<div style="position:absolute;left:690.8px;top:588.9px;width:19.2px;height:19.2px;border-radius:50%;overflow:hidden;"><svg width="19.2" height="19.2" viewBox="0 0 26 26" style="filter:blur(0.35px)"><rect width="26" height="26" fill="#8f7540"/><path d="M0 3.500h26M0 7.500h26M0 11.500h26M0 15.500h26M0 19.500h26M0 23.500h26" stroke="#7a6334" stroke-width="1.100" opacity=".5"/><path d="M0 0h7l-1 26H0z" fill="#6b5a33" opacity=".45"/><path d="M5 26c0-3.500 2-5.500 5-6.500l6-.500c4 1 6.500 3 7.500 7z" fill="#a87452"/><path d="M13 26l1.500-5.500c4 .500 7 2 8.500 5.500z" fill="#7b8788"/><ellipse cx="12.500" cy="11.800" rx="6.500" ry="8" fill="#cf9b7c"/><ellipse cx="10.300" cy="13.500" rx="3.200" ry="4.200" fill="#e8c9b4" opacity=".65"/><path d="M8 19.500c2.500 2.300 6.500 2.300 9-.300l-.500 2.500c-2.500 1.500-5.500 1.500-8 0z" fill="#9b6a4c" opacity=".6"/><path d="M6 8.500c-.800-5.500 3.500-8.800 8.500-8.300 5.200.500 6.800 5.300 5.300 11.300-.600-3.300-1.800-5.500-4.300-6.300-3.300-.900-7 .300-9.500 3.300z" fill="#33251f"/><path d="M6.300 8.600l6.200 1.200 6.600 1.800" fill="none" stroke="#3a2d2b" stroke-width="1.100" opacity=".8"/><ellipse cx="9" cy="9.800" rx="1.400" ry=".9" fill="#4a3a36" opacity=".6"/><ellipse cx="15.300" cy="11.200" rx="1.400" ry=".9" fill="#4a3a36" opacity=".6"/><ellipse cx="12" cy="16.300" rx="2.300" ry=".9" fill="#b76c6e"/></svg></div>
<svg style="position:absolute;left:1148.7px;top:591.2px;" width="15" height="15" viewBox="0 0 15 15"><circle cx="7.500" cy="7.500" r="6.700" fill="none" stroke="#dcdee3" stroke-width="1.600"/><path d="M8.100 4v4.300H5.400" fill="none" stroke="#dcdee3" stroke-width="1.300"/></svg>
<div style="position:absolute;left:1733px;top:589px;width:37px;height:18px;background:#8bd0db;border-radius:9px;"></div>
<div style="position:absolute;left:0px;top:614px;width:1905px;height:1px;background:#e2e4e9;"></div>
<div style="position:absolute;left:0px;top:615px;width:1905px;height:32px;background:#fbfbfc;"></div>
<div style="position:absolute;left:16px;top:625px;width:12px;height:12px;box-sizing:border-box;border:1px solid #6b7280;border-radius:2px;background:#fff;"></div>
<svg style="position:absolute;left:42px;top:618.2px;" width="20" height="20" viewBox="0 0 20 20"><path d="M10.30 2.85L12.71 7.63L18.00 8.45L14.20 12.22L15.06 17.50L10.30 15.05L5.54 17.50L6.40 12.22L2.60 8.45L7.89 7.63z" fill="none" stroke="#737a88" stroke-width="1.200" stroke-linejoin="round"/></svg>
<div style="position:absolute;left:690.8px;top:621.9px;width:19.2px;height:19.2px;border-radius:50%;overflow:hidden;"><svg width="19.2" height="19.2" viewBox="0 0 26 26" style="filter:blur(0.35px)"><rect width="26" height="26" fill="#8f7540"/><path d="M0 3.500h26M0 7.500h26M0 11.500h26M0 15.500h26M0 19.500h26M0 23.500h26" stroke="#7a6334" stroke-width="1.100" opacity=".5"/><path d="M0 0h7l-1 26H0z" fill="#6b5a33" opacity=".45"/><path d="M5 26c0-3.500 2-5.500 5-6.500l6-.500c4 1 6.500 3 7.500 7z" fill="#a87452"/><path d="M13 26l1.500-5.500c4 .500 7 2 8.500 5.500z" fill="#7b8788"/><ellipse cx="12.500" cy="11.800" rx="6.500" ry="8" fill="#cf9b7c"/><ellipse cx="10.300" cy="13.500" rx="3.200" ry="4.200" fill="#e8c9b4" opacity=".65"/><path d="M8 19.500c2.500 2.300 6.500 2.300 9-.300l-.500 2.500c-2.500 1.500-5.500 1.500-8 0z" fill="#9b6a4c" opacity=".6"/><path d="M6 8.500c-.800-5.500 3.500-8.800 8.500-8.300 5.200.500 6.800 5.300 5.300 11.300-.600-3.300-1.800-5.500-4.300-6.300-3.300-.900-7 .300-9.500 3.300z" fill="#33251f"/><path d="M6.300 8.600l6.200 1.200 6.600 1.800" fill="none" stroke="#3a2d2b" stroke-width="1.100" opacity=".8"/><ellipse cx="9" cy="9.800" rx="1.400" ry=".9" fill="#4a3a36" opacity=".6"/><ellipse cx="15.300" cy="11.200" rx="1.400" ry=".9" fill="#4a3a36" opacity=".6"/><ellipse cx="12" cy="16.300" rx="2.300" ry=".9" fill="#b76c6e"/></svg></div>
<svg style="position:absolute;left:1148.7px;top:624.2px;" width="15" height="15" viewBox="0 0 15 15"><circle cx="7.500" cy="7.500" r="6.700" fill="none" stroke="#dcdee3" stroke-width="1.600"/><path d="M8.100 4v4.300H5.400" fill="none" stroke="#dcdee3" stroke-width="1.300"/></svg>
<div style="position:absolute;left:1733px;top:622px;width:37px;height:18px;background:#8bd0db;border-radius:9px;"></div>
<div style="position:absolute;left:0px;top:647px;width:1905px;height:1px;background:#e2e4e9;"></div>
<div style="position:absolute;left:0px;top:648px;width:1905px;height:32px;background:#fff;"></div>
<div style="position:absolute;left:16px;top:658px;width:12px;height:12px;box-sizing:border-box;border:1px solid #6b7280;border-radius:2px;background:#fff;"></div>
<svg style="position:absolute;left:42px;top:651.2px;" width="20" height="20" viewBox="0 0 20 20"><path d="M10.30 2.85L12.71 7.63L18.00 8.45L14.20 12.22L15.06 17.50L10.30 15.05L5.54 17.50L6.40 12.22L2.60 8.45L7.89 7.63z" fill="none" stroke="#737a88" stroke-width="1.200" stroke-linejoin="round"/></svg>
<div style="position:absolute;left:690.8px;top:654.9px;width:19.2px;height:19.2px;border-radius:50%;overflow:hidden;"><svg width="19.2" height="19.2" viewBox="0 0 26 26" style="filter:blur(0.35px)"><rect width="26" height="26" fill="#8f7540"/><path d="M0 3.500h26M0 7.500h26M0 11.500h26M0 15.500h26M0 19.500h26M0 23.500h26" stroke="#7a6334" stroke-width="1.100" opacity=".5"/><path d="M0 0h7l-1 26H0z" fill="#6b5a33" opacity=".45"/><path d="M5 26c0-3.500 2-5.500 5-6.500l6-.500c4 1 6.500 3 7.500 7z" fill="#a87452"/><path d="M13 26l1.500-5.500c4 .500 7 2 8.500 5.500z" fill="#7b8788"/><ellipse cx="12.500" cy="11.800" rx="6.500" ry="8" fill="#cf9b7c"/><ellipse cx="10.300" cy="13.500" rx="3.200" ry="4.200" fill="#e8c9b4" opacity=".65"/><path d="M8 19.500c2.500 2.300 6.500 2.300 9-.300l-.500 2.500c-2.500 1.500-5.500 1.500-8 0z" fill="#9b6a4c" opacity=".6"/><path d="M6 8.500c-.800-5.500 3.500-8.800 8.500-8.300 5.200.500 6.800 5.300 5.300 11.300-.600-3.300-1.800-5.500-4.300-6.300-3.300-.900-7 .300-9.500 3.300z" fill="#33251f"/><path d="M6.300 8.600l6.200 1.200 6.600 1.800" fill="none" stroke="#3a2d2b" stroke-width="1.100" opacity=".8"/><ellipse cx="9" cy="9.800" rx="1.400" ry=".9" fill="#4a3a36" opacity=".6"/><ellipse cx="15.300" cy="11.200" rx="1.400" ry=".9" fill="#4a3a36" opacity=".6"/><ellipse cx="12" cy="16.300" rx="2.300" ry=".9" fill="#b76c6e"/></svg></div>
<svg style="position:absolute;left:1148.7px;top:657.2px;" width="15" height="15" viewBox="0 0 15 15"><circle cx="7.500" cy="7.500" r="6.700" fill="none" stroke="#dcdee3" stroke-width="1.600"/><path d="M8.100 4v4.300H5.400" fill="none" stroke="#dcdee3" stroke-width="1.300"/></svg>
<div style="position:absolute;left:1733px;top:655px;width:37px;height:18px;background:#8bd0db;border-radius:9px;"></div>
<div style="position:absolute;left:0px;top:680px;width:1905px;height:1px;background:#e2e4e9;"></div>
<div style="position:absolute;left:0px;top:681px;width:1905px;height:32px;background:#fbfbfc;"></div>
<div style="position:absolute;left:16px;top:691px;width:12px;height:12px;box-sizing:border-box;border:1px solid #6b7280;border-radius:2px;background:#fff;"></div>
<svg style="position:absolute;left:42px;top:684.2px;" width="20" height="20" viewBox="0 0 20 20"><path d="M10.30 2.85L12.71 7.63L18.00 8.45L14.20 12.22L15.06 17.50L10.30 15.05L5.54 17.50L6.40 12.22L2.60 8.45L7.89 7.63z" fill="none" stroke="#737a88" stroke-width="1.200" stroke-linejoin="round"/></svg>
<div style="position:absolute;left:690.8px;top:687.9px;width:19.2px;height:19.2px;border-radius:50%;overflow:hidden;"><svg width="19.2" height="19.2" viewBox="0 0 26 26" style="filter:blur(0.35px)"><rect width="26" height="26" fill="#8f7540"/><path d="M0 3.500h26M0 7.500h26M0 11.500h26M0 15.500h26M0 19.500h26M0 23.500h26" stroke="#7a6334" stroke-width="1.100" opacity=".5"/><path d="M0 0h7l-1 26H0z" fill="#6b5a33" opacity=".45"/><path d="M5 26c0-3.500 2-5.500 5-6.500l6-.500c4 1 6.500 3 7.500 7z" fill="#a87452"/><path d="M13 26l1.500-5.500c4 .500 7 2 8.500 5.500z" fill="#7b8788"/><ellipse cx="12.500" cy="11.800" rx="6.500" ry="8" fill="#cf9b7c"/><ellipse cx="10.300" cy="13.500" rx="3.200" ry="4.200" fill="#e8c9b4" opacity=".65"/><path d="M8 19.500c2.500 2.300 6.500 2.300 9-.300l-.500 2.500c-2.500 1.500-5.500 1.500-8 0z" fill="#9b6a4c" opacity=".6"/><path d="M6 8.500c-.800-5.500 3.500-8.800 8.500-8.300 5.200.500 6.800 5.300 5.300 11.300-.600-3.300-1.800-5.500-4.300-6.300-3.300-.900-7 .300-9.500 3.300z" fill="#33251f"/><path d="M6.300 8.600l6.200 1.200 6.600 1.800" fill="none" stroke="#3a2d2b" stroke-width="1.100" opacity=".8"/><ellipse cx="9" cy="9.800" rx="1.400" ry=".9" fill="#4a3a36" opacity=".6"/><ellipse cx="15.300" cy="11.200" rx="1.400" ry=".9" fill="#4a3a36" opacity=".6"/><ellipse cx="12" cy="16.300" rx="2.300" ry=".9" fill="#b76c6e"/></svg></div>
<svg style="position:absolute;left:1148.7px;top:690.2px;" width="15" height="15" viewBox="0 0 15 15"><circle cx="7.500" cy="7.500" r="6.700" fill="none" stroke="#dcdee3" stroke-width="1.600"/><path d="M8.100 4v4.300H5.400" fill="none" stroke="#dcdee3" stroke-width="1.300"/></svg>
<div style="position:absolute;left:1733px;top:688px;width:37px;height:18px;background:#8bd0db;border-radius:9px;"></div>
<div style="position:absolute;left:0px;top:713px;width:1905px;height:1px;background:#e2e4e9;"></div>
<div style="position:absolute;left:0px;top:714px;width:1905px;height:32px;background:#fff;"></div>
<div style="position:absolute;left:16px;top:724px;width:12px;height:12px;box-sizing:border-box;border:1px solid #6b7280;border-radius:2px;background:#fff;"></div>
<svg style="position:absolute;left:42px;top:717.2px;" width="20" height="20" viewBox="0 0 20 20"><path d="M10.30 2.85L12.71 7.63L18.00 8.45L14.20 12.22L15.06 17.50L10.30 15.05L5.54 17.50L6.40 12.22L2.60 8.45L7.89 7.63z" fill="none" stroke="#737a88" stroke-width="1.200" stroke-linejoin="round"/></svg>
<div style="position:absolute;left:690.8px;top:720.9px;width:19.2px;height:19.2px;border-radius:50%;overflow:hidden;"><svg width="19.2" height="19.2" viewBox="0 0 26 26" style="filter:blur(0.35px)"><rect width="26" height="26" fill="#8f7540"/><path d="M0 3.500h26M0 7.500h26M0 11.500h26M0 15.500h26M0 19.500h26M0 23.500h26" stroke="#7a6334" stroke-width="1.100" opacity=".5"/><path d="M0 0h7l-1 26H0z" fill="#6b5a33" opacity=".45"/><path d="M5 26c0-3.500 2-5.500 5-6.500l6-.500c4 1 6.500 3 7.500 7z" fill="#a87452"/><path d="M13 26l1.500-5.500c4 .500 7 2 8.500 5.500z" fill="#7b8788"/><ellipse cx="12.500" cy="11.800" rx="6.500" ry="8" fill="#cf9b7c"/><ellipse cx="10.300" cy="13.500" rx="3.200" ry="4.200" fill="#e8c9b4" opacity=".65"/><path d="M8 19.500c2.500 2.300 6.500 2.300 9-.300l-.500 2.500c-2.500 1.500-5.500 1.500-8 0z" fill="#9b6a4c" opacity=".6"/><path d="M6 8.500c-.800-5.500 3.500-8.800 8.500-8.300 5.200.500 6.800 5.300 5.300 11.300-.600-3.300-1.800-5.500-4.300-6.300-3.300-.900-7 .300-9.500 3.300z" fill="#33251f"/><path d="M6.300 8.600l6.200 1.200 6.600 1.800" fill="none" stroke="#3a2d2b" stroke-width="1.100" opacity=".8"/><ellipse cx="9" cy="9.800" rx="1.400" ry=".9" fill="#4a3a36" opacity=".6"/><ellipse cx="15.300" cy="11.200" rx="1.400" ry=".9" fill="#4a3a36" opacity=".6"/><ellipse cx="12" cy="16.300" rx="2.300" ry=".9" fill="#b76c6e"/></svg></div>
<svg style="position:absolute;left:1148.7px;top:723.2px;" width="15" height="15" viewBox="0 0 15 15"><circle cx="7.500" cy="7.500" r="6.700" fill="none" stroke="#dcdee3" stroke-width="1.600"/><path d="M8.100 4v4.300H5.400" fill="none" stroke="#dcdee3" stroke-width="1.300"/></svg>
<div style="position:absolute;left:1733px;top:721px;width:67px;height:18px;background:#e9e9ea;border-radius:9px;"></div>
<div style="position:absolute;left:0px;top:746px;width:1905px;height:1px;background:#e2e4e9;"></div>
<div style="position:absolute;left:0px;top:747px;width:1905px;height:32px;background:#fbfbfc;"></div>
<div style="position:absolute;left:16px;top:757px;width:12px;height:12px;box-sizing:border-box;border:1px solid #6b7280;border-radius:2px;background:#fff;"></div>
<svg style="position:absolute;left:42px;top:750.2px;" width="20" height="20" viewBox="0 0 20 20"><path d="M10.30 2.85L12.71 7.63L18.00 8.45L14.20 12.22L15.06 17.50L10.30 15.05L5.54 17.50L6.40 12.22L2.60 8.45L7.89 7.63z" fill="none" stroke="#737a88" stroke-width="1.200" stroke-linejoin="round"/></svg>
<div style="position:absolute;left:690.8px;top:753.9px;width:19.2px;height:19.2px;border-radius:50%;overflow:hidden;"><svg width="19.2" height="19.2" viewBox="0 0 26 26" style="filter:blur(0.35px)"><rect width="26" height="26" fill="#8f7540"/><path d="M0 3.500h26M0 7.500h26M0 11.500h26M0 15.500h26M0 19.500h26M0 23.500h26" stroke="#7a6334" stroke-width="1.100" opacity=".5"/><path d="M0 0h7l-1 26H0z" fill="#6b5a33" opacity=".45"/><path d="M5 26c0-3.500 2-5.500 5-6.500l6-.500c4 1 6.500 3 7.500 7z" fill="#a87452"/><path d="M13 26l1.500-5.500c4 .500 7 2 8.500 5.500z" fill="#7b8788"/><ellipse cx="12.500" cy="11.800" rx="6.500" ry="8" fill="#cf9b7c"/><ellipse cx="10.300" cy="13.500" rx="3.200" ry="4.200" fill="#e8c9b4" opacity=".65"/><path d="M8 19.500c2.500 2.300 6.500 2.300 9-.300l-.500 2.500c-2.500 1.500-5.500 1.500-8 0z" fill="#9b6a4c" opacity=".6"/><path d="M6 8.500c-.800-5.500 3.500-8.800 8.500-8.300 5.200.500 6.800 5.300 5.300 11.300-.600-3.300-1.800-5.500-4.300-6.300-3.300-.900-7 .300-9.500 3.300z" fill="#33251f"/><path d="M6.300 8.600l6.200 1.200 6.600 1.800" fill="none" stroke="#3a2d2b" stroke-width="1.100" opacity=".8"/><ellipse cx="9" cy="9.800" rx="1.400" ry=".9" fill="#4a3a36" opacity=".6"/><ellipse cx="15.300" cy="11.200" rx="1.400" ry=".9" fill="#4a3a36" opacity=".6"/><ellipse cx="12" cy="16.300" rx="2.300" ry=".9" fill="#b76c6e"/></svg></div>
<svg style="position:absolute;left:1148.7px;top:756.2px;" width="15" height="15" viewBox="0 0 15 15"><circle cx="7.500" cy="7.500" r="6.700" fill="none" stroke="#dcdee3" stroke-width="1.600"/><path d="M8.100 4v4.300H5.400" fill="none" stroke="#dcdee3" stroke-width="1.300"/></svg>
<div style="position:absolute;left:1733px;top:754px;width:67px;height:18px;background:#e9e9ea;border-radius:9px;"></div>
<div style="position:absolute;left:0px;top:779px;width:1905px;height:1px;background:#e2e4e9;"></div>
<div style="position:absolute;left:0px;top:780px;width:1905px;height:32px;background:#fff;"></div>
<div style="position:absolute;left:16px;top:790px;width:12px;height:12px;box-sizing:border-box;border:1px solid #6b7280;border-radius:2px;background:#fff;"></div>
<svg style="position:absolute;left:42px;top:783.2px;" width="20" height="20" viewBox="0 0 20 20"><path d="M10.30 2.85L12.71 7.63L18.00 8.45L14.20 12.22L15.06 17.50L10.30 15.05L5.54 17.50L6.40 12.22L2.60 8.45L7.89 7.63z" fill="none" stroke="#737a88" stroke-width="1.200" stroke-linejoin="round"/></svg>
<div style="position:absolute;left:690.8px;top:786.9px;width:19.2px;height:19.2px;border-radius:50%;overflow:hidden;"><svg width="19.2" height="19.2" viewBox="0 0 26 26" style="filter:blur(0.35px)"><rect width="26" height="26" fill="#8f7540"/><path d="M0 3.500h26M0 7.500h26M0 11.500h26M0 15.500h26M0 19.500h26M0 23.500h26" stroke="#7a6334" stroke-width="1.100" opacity=".5"/><path d="M0 0h7l-1 26H0z" fill="#6b5a33" opacity=".45"/><path d="M5 26c0-3.500 2-5.500 5-6.500l6-.500c4 1 6.500 3 7.500 7z" fill="#a87452"/><path d="M13 26l1.500-5.500c4 .500 7 2 8.500 5.500z" fill="#7b8788"/><ellipse cx="12.500" cy="11.800" rx="6.500" ry="8" fill="#cf9b7c"/><ellipse cx="10.300" cy="13.500" rx="3.200" ry="4.200" fill="#e8c9b4" opacity=".65"/><path d="M8 19.500c2.500 2.300 6.500 2.300 9-.300l-.500 2.500c-2.500 1.500-5.500 1.500-8 0z" fill="#9b6a4c" opacity=".6"/><path d="M6 8.500c-.800-5.500 3.500-8.800 8.500-8.300 5.200.500 6.800 5.300 5.300 11.300-.600-3.300-1.800-5.500-4.300-6.300-3.300-.900-7 .300-9.500 3.300z" fill="#33251f"/><path d="M6.300 8.600l6.200 1.200 6.600 1.800" fill="none" stroke="#3a2d2b" stroke-width="1.100" opacity=".8"/><ellipse cx="9" cy="9.800" rx="1.400" ry=".9" fill="#4a3a36" opacity=".6"/><ellipse cx="15.300" cy="11.200" rx="1.400" ry=".9" fill="#4a3a36" opacity=".6"/><ellipse cx="12" cy="16.300" rx="2.300" ry=".9" fill="#b76c6e"/></svg></div>
<svg style="position:absolute;left:1148.7px;top:789.2px;" width="15" height="15" viewBox="0 0 15 15"><circle cx="7.500" cy="7.500" r="6.700" fill="none" stroke="#dcdee3" stroke-width="1.600"/><path d="M8.100 4v4.300H5.400" fill="none" stroke="#dcdee3" stroke-width="1.300"/></svg>
<div style="position:absolute;left:1733px;top:787px;width:98.2px;height:18px;background:#8fd19e;border-radius:9px;"></div>
<div style="position:absolute;left:0px;top:812px;width:1905px;height:1px;background:#e2e4e9;"></div>
<div style="position:absolute;left:0px;top:813px;width:1905px;height:32px;background:#fbfbfc;"></div>
<div style="position:absolute;left:16px;top:823px;width:12px;height:12px;box-sizing:border-box;border:1px solid #6b7280;border-radius:2px;background:#fff;"></div>
<svg style="position:absolute;left:42px;top:816.2px;" width="20" height="20" viewBox="0 0 20 20"><path d="M10.30 2.85L12.71 7.63L18.00 8.45L14.20 12.22L15.06 17.50L10.30 15.05L5.54 17.50L6.40 12.22L2.60 8.45L7.89 7.63z" fill="none" stroke="#737a88" stroke-width="1.200" stroke-linejoin="round"/></svg>
<div style="position:absolute;left:690.8px;top:819.9px;width:19.2px;height:19.2px;border-radius:50%;overflow:hidden;"><svg width="19.2" height="19.2" viewBox="0 0 26 26" style="filter:blur(0.35px)"><rect width="26" height="26" fill="#8f7540"/><path d="M0 3.500h26M0 7.500h26M0 11.500h26M0 15.500h26M0 19.500h26M0 23.500h26" stroke="#7a6334" stroke-width="1.100" opacity=".5"/><path d="M0 0h7l-1 26H0z" fill="#6b5a33" opacity=".45"/><path d="M5 26c0-3.500 2-5.500 5-6.500l6-.500c4 1 6.500 3 7.500 7z" fill="#a87452"/><path d="M13 26l1.500-5.500c4 .500 7 2 8.500 5.500z" fill="#7b8788"/><ellipse cx="12.500" cy="11.800" rx="6.500" ry="8" fill="#cf9b7c"/><ellipse cx="10.300" cy="13.500" rx="3.200" ry="4.200" fill="#e8c9b4" opacity=".65"/><path d="M8 19.500c2.500 2.300 6.500 2.300 9-.300l-.500 2.500c-2.500 1.500-5.500 1.500-8 0z" fill="#9b6a4c" opacity=".6"/><path d="M6 8.500c-.800-5.500 3.500-8.800 8.500-8.300 5.200.500 6.800 5.300 5.300 11.300-.600-3.300-1.800-5.500-4.300-6.300-3.300-.900-7 .300-9.500 3.300z" fill="#33251f"/><path d="M6.300 8.600l6.200 1.200 6.600 1.800" fill="none" stroke="#3a2d2b" stroke-width="1.100" opacity=".8"/><ellipse cx="9" cy="9.800" rx="1.400" ry=".9" fill="#4a3a36" opacity=".6"/><ellipse cx="15.300" cy="11.200" rx="1.400" ry=".9" fill="#4a3a36" opacity=".6"/><ellipse cx="12" cy="16.300" rx="2.300" ry=".9" fill="#b76c6e"/></svg></div>
<svg style="position:absolute;left:1148.7px;top:822.2px;" width="15" height="15" viewBox="0 0 15 15"><circle cx="7.500" cy="7.500" r="6.700" fill="none" stroke="#dcdee3" stroke-width="1.600"/><path d="M8.100 4v4.300H5.400" fill="none" stroke="#dcdee3" stroke-width="1.300"/></svg>
<div style="position:absolute;left:1733px;top:820px;width:98.2px;height:18px;background:#8fd19e;border-radius:9px;"></div>
<div style="position:absolute;left:0px;top:845px;width:1905px;height:1px;background:#e2e4e9;"></div>
<div style="position:absolute;left:0px;top:846px;width:1905px;height:32px;background:#fff;"></div>
<div style="position:absolute;left:16px;top:856px;width:12px;height:12px;box-sizing:border-box;border:1px solid #6b7280;border-radius:2px;background:#fff;"></div>
<svg style="position:absolute;left:42px;top:849.2px;" width="20" height="20" viewBox="0 0 20 20"><path d="M10.30 2.85L12.71 7.63L18.00 8.45L14.20 12.22L15.06 17.50L10.30 15.05L5.54 17.50L6.40 12.22L2.60 8.45L7.89 7.63z" fill="none" stroke="#737a88" stroke-width="1.200" stroke-linejoin="round"/></svg>
<div style="position:absolute;left:690.8px;top:852.9px;width:19.2px;height:19.2px;border-radius:50%;overflow:hidden;"><svg width="19.2" height="19.2" viewBox="0 0 26 26" style="filter:blur(0.35px)"><rect width="26" height="26" fill="#8f7540"/><path d="M0 3.500h26M0 7.500h26M0 11.500h26M0 15.500h26M0 19.500h26M0 23.500h26" stroke="#7a6334" stroke-width="1.100" opacity=".5"/><path d="M0 0h7l-1 26H0z" fill="#6b5a33" opacity=".45"/><path d="M5 26c0-3.500 2-5.500 5-6.500l6-.500c4 1 6.500 3 7.500 7z" fill="#a87452"/><path d="M13 26l1.500-5.500c4 .500 7 2 8.500 5.500z" fill="#7b8788"/><ellipse cx="12.500" cy="11.800" rx="6.500" ry="8" fill="#cf9b7c"/><ellipse cx="10.300" cy="13.500" rx="3.200" ry="4.200" fill="#e8c9b4" opacity=".65"/><path d="M8 19.500c2.500 2.300 6.500 2.300 9-.300l-.500 2.500c-2.500 1.500-5.500 1.500-8 0z" fill="#9b6a4c" opacity=".6"/><path d="M6 8.500c-.800-5.500 3.500-8.800 8.500-8.300 5.200.500 6.800 5.300 5.300 11.300-.600-3.300-1.800-5.500-4.300-6.300-3.300-.900-7 .300-9.500 3.300z" fill="#33251f"/><path d="M6.300 8.600l6.200 1.200 6.600 1.800" fill="none" stroke="#3a2d2b" stroke-width="1.100" opacity=".8"/><ellipse cx="9" cy="9.800" rx="1.400" ry=".9" fill="#4a3a36" opacity=".6"/><ellipse cx="15.300" cy="11.200" rx="1.400" ry=".9" fill="#4a3a36" opacity=".6"/><ellipse cx="12" cy="16.300" rx="2.300" ry=".9" fill="#b76c6e"/></svg></div>
<svg style="position:absolute;left:1148.7px;top:855.2px;" width="15" height="15" viewBox="0 0 15 15"><circle cx="7.500" cy="7.500" r="6.700" fill="none" stroke="#dcdee3" stroke-width="1.600"/><path d="M8.100 4v4.300H5.400" fill="none" stroke="#dcdee3" stroke-width="1.300"/></svg>
<div style="position:absolute;left:1733px;top:853px;width:98.2px;height:18px;background:#8fd19e;border-radius:9px;"></div>
<div style="position:absolute;left:0px;top:878px;width:1905px;height:1px;background:#e2e4e9;"></div>
<div style="position:absolute;left:0px;top:879px;width:1905px;height:32px;background:#fbfbfc;"></div>
<div style="position:absolute;left:76px;top:283px;width:1px;height:600px;background:#fff;"></div>
<div style="position:absolute;left:926px;top:283px;width:1px;height:600px;background:#fff;"></div>
<div style="position:absolute;left:1140px;top:283px;width:1px;height:600px;background:#fff;"></div>
<div style="position:absolute;left:1396px;top:283px;width:1px;height:600px;background:#fff;"></div>
<div style="position:absolute;left:1575px;top:283px;width:1px;height:600px;background:#fff;"></div>
<div style="position:absolute;left:5.4px;top:282.2px;width:1895px;height:34.3px;box-sizing:border-box;border:3.2px solid #ff0000;border-radius:3px;"></div>
<div style="position:absolute;left:2.4px;top:714.4px;width:1901.1px;height:67.3px;box-sizing:border-box;border:3.3px solid #ff0000;border-radius:3px;"></div>
<div style="position:absolute;left:1905px;top:130px;width:14px;height:753px;background:#f1f1f1;"></div>
<div style="position:absolute;left:1907px;top:145.4px;width:11px;height:570.1px;background:#c1c1c1;"></div>
<svg style="position:absolute;left:1908.8px;top:136.3px;" width="7.6" height="4.2" viewBox="0 0 9 5"><path d="M0 5L4.500 0 9 5z" fill="#a3a3a3"/></svg>
<svg style="position:absolute;left:1908.8px;top:874px;" width="7.8" height="4.2" viewBox="0 0 9 5"><path d="M0 0L4.500 5 9 0z" fill="#505050"/></svg>
<span class="t" style="left:48.52px;top:6.00px;font-size:20.5px;line-height:27px;color:#ffffff;-webkit-text-stroke:0.3px #ffffff;letter-spacing:-0.215px;">Purchase</span>
<span class="t" style="left:165.21px;top:10.00px;font-size:13px;line-height:19px;color:#ffffff;letter-spacing:-0.216px;">Orders</span>
<span class="t" style="left:235.25px;top:10.00px;font-size:13px;line-height:19px;color:#ffffff;letter-spacing:0.201px;">Products</span>
<span class="t" style="left:319.79px;top:10.00px;font-size:13px;line-height:19px;color:#ffffff;letter-spacing:-0.006px;">Reporting</span>
<span class="t" style="left:408.12px;top:10.00px;font-size:13px;line-height:19px;color:#ffffff;letter-spacing:0.053px;">Configuration</span>
<span class="t" style="left:1578.91px;top:10.00px;font-size:13px;line-height:19px;color:#ffffff;letter-spacing:-0.084px;">My Company (San Francisco)</span>
<span class="t" style="left:1817.12px;top:10.00px;font-size:13px;line-height:19px;color:#ffffff;letter-spacing:0.240px;">Mitchell Admin</span>
<span class="t" style="left:1499.29px;top:7.20px;font-size:9.5px;line-height:15px;color:#ffffff;-webkit-text-stroke:0.3px #ffffff;">4</span>
<span class="t" style="left:1537.32px;top:7.20px;font-size:9.5px;line-height:15px;color:#ffffff;-webkit-text-stroke:0.3px #ffffff;letter-spacing:-0.329px;">12</span>
<span class="t" style="left:15.23px;top:55.00px;font-size:18px;line-height:24px;color:#111827;letter-spacing:0.052px;">Requests for Quotation</span>
<span class="t" style="left:25.78px;top:94.00px;font-size:13px;line-height:19px;color:#ffffff;-webkit-text-stroke:0.5px #ffffff;transform:scaleX(0.8993);transform-origin:0 0;">CREATE</span>
<span class="t" style="left:961.94px;top:54.00px;font-size:13px;line-height:19px;color:#aeb4bd;letter-spacing:-0.206px;">Search...</span>
<span class="t" style="left:981.39px;top:94.00px;font-size:13px;line-height:19px;color:#374151;-webkit-text-stroke:0.5px #374151;letter-spacing:-0.010px;">Filters</span>
<span class="t" style="left:1048.51px;top:94.00px;font-size:13px;line-height:19px;color:#374151;-webkit-text-stroke:0.5px #374151;letter-spacing:-0.346px;">Group By</span>
<span class="t" style="left:1132.87px;top:94.00px;font-size:13px;line-height:19px;color:#374151;-webkit-text-stroke:0.5px #374151;letter-spacing:-0.098px;">Favorites</span>
<span class="t" style="left:1582.37px;top:93.00px;font-size:13px;line-height:19px;color:#374151;">1-23 / 23</span>
<span class="t" style="left:100.00px;top:154.00px;font-size:13px;line-height:19px;color:#374151;transform:scaleX(0.9448);transform-origin:0 0;">All RFQs</span>
<span class="t" style="left:97.68px;top:194.00px;font-size:13px;line-height:19px;color:#374151;transform:scaleX(0.9479);transform-origin:0 0;">My RFQs</span>
<span class="t" style="left:302.18px;top:144.00px;font-size:13px;line-height:19px;color:#ffffff;letter-spacing:0.048px;">14</span>
<span class="t" style="left:286.64px;top:164.00px;font-size:13px;line-height:19px;color:#ffffff;letter-spacing:-0.126px;">To Send</span>
<span class="t" style="left:302.18px;top:194.00px;font-size:13px;line-height:19px;color:#ffffff;letter-spacing:0.048px;">14</span>
<span class="t" style="left:492.15px;top:144.00px;font-size:13px;line-height:19px;color:#ffffff;">0</span>
<span class="t" style="left:474.47px;top:164.00px;font-size:13px;line-height:19px;color:#ffffff;letter-spacing:0.078px;">Waiting</span>
<span class="t" style="left:492.15px;top:194.00px;font-size:13px;line-height:19px;color:#ffffff;">0</span>
<span class="t" style="left:674.02px;top:144.00px;font-size:13px;line-height:19px;color:#ffffff;letter-spacing:-0.285px;">13</span>
<span class="t" style="left:667.72px;top:164.00px;font-size:13px;line-height:19px;color:#ffffff;letter-spacing:0.263px;">Late</span>
<span class="t" style="left:674.02px;top:194.00px;font-size:13px;line-height:19px;color:#ffffff;letter-spacing:-0.285px;">13</span>
<span class="t" style="left:892.96px;top:146.50px;font-size:13px;line-height:19px;color:#374151;letter-spacing:-0.149px;">Avg Order Value ($)</span>
<span class="t" style="left:881.87px;top:179.50px;font-size:13px;line-height:19px;color:#374151;letter-spacing:-0.032px;">Lead Time to Purchase</span>
<span class="t" style="left:1183.07px;top:146.50px;font-size:13px;line-height:19px;color:#374151;letter-spacing:-0.184px;">$ 6,801.63</span>
<span class="t" style="left:1191.79px;top:179.50px;font-size:13px;line-height:19px;color:#374151;">7</span>
<span class="t" style="left:1205.88px;top:179.50px;font-size:13px;line-height:19px;color:#374151;transform:scaleX(0.9357);transform-origin:0 0;">Days</span>
<span class="t" style="left:1401.23px;top:146.50px;font-size:13px;line-height:19px;color:#374151;letter-spacing:-0.085px;">Purchased Last 7 Days ($)</span>
<span class="t" style="left:1411.65px;top:179.50px;font-size:13px;line-height:19px;color:#374151;letter-spacing:-0.274px;">RFQs Sent Last 7 Days</span>
<span class="t" style="left:1708.07px;top:146.50px;font-size:13px;line-height:19px;color:#374151;letter-spacing:-0.102px;">$ 18,236.00</span>
<span class="t" style="left:1738.15px;top:179.50px;font-size:13px;line-height:19px;color:#374151;">0</span>
<span class="t" style="left:80.07px;top:251.00px;font-size:13px;line-height:19px;color:#111827;-webkit-text-stroke:0.5px #111827;letter-spacing:-0.195px;">Reference</span>
<span class="t" style="left:193.49px;top:251.00px;font-size:13px;line-height:19px;color:#111827;-webkit-text-stroke:0.5px #111827;letter-spacing:-0.108px;">Vendor</span>
<span class="t" style="left:431.41px;top:251.00px;font-size:13px;line-height:19px;color:#111827;-webkit-text-stroke:0.5px #111827;letter-spacing:-0.200px;">Company</span>
<span class="t" style="left:691.04px;top:251.00px;font-size:13px;line-height:19px;color:#111827;-webkit-text-stroke:0.5px #111827;letter-spacing:-0.057px;">Purchase Representative</span>
<span class="t" style="left:930.42px;top:251.00px;font-size:13px;line-height:19px;color:#111827;-webkit-text-stroke:0.5px #111827;letter-spacing:-0.153px;">Order Deadline</span>
<span class="t" style="left:1144.19px;top:251.00px;font-size:13px;line-height:19px;color:#111827;-webkit-text-stroke:0.5px #111827;letter-spacing:0.193px;">Next Activity</span>
<span class="t" style="left:1401.03px;top:251.00px;font-size:13px;line-height:19px;color:#111827;-webkit-text-stroke:0.5px #111827;letter-spacing:-0.102px;">Source Document</span>
<span class="t" style="left:1687.12px;top:251.00px;font-size:13px;line-height:19px;color:#111827;-webkit-text-stroke:0.5px #111827;letter-spacing:-0.010px;">Total</span>
<span class="t" style="left:1733.19px;top:251.00px;font-size:13px;line-height:19px;color:#111827;-webkit-text-stroke:0.5px #111827;letter-spacing:-0.110px;">Status</span>
<span class="t" style="left:80.23px;top:290.00px;font-size:13px;line-height:19px;color:#0a84a8;-webkit-text-stroke:0.4px #0a84a8;letter-spacing:0.104px;">P00026</span>
<span class="t" style="left:193.04px;top:290.00px;font-size:13px;line-height:19px;color:#0a84a8;letter-spacing:-0.090px;">Azure Interior, Nicole Ford</span>
<span class="t" style="left:431.71px;top:290.00px;font-size:13px;line-height:19px;color:#0a84a8;letter-spacing:-0.120px;">My Company (San Francisco)</span>
<span class="t" style="left:717.32px;top:290.00px;font-size:13px;line-height:19px;color:#0a84a8;letter-spacing:0.232px;">Mitchell Admin</span>
<span class="t" style="left:931.56px;top:290.00px;font-size:13px;line-height:19px;color:#ad7a08;-webkit-text-stroke:0.5px #ad7a08;letter-spacing:-0.104px;">Today</span>
<span class="t" style="left:1664.54px;top:290.00px;font-size:13px;line-height:19px;color:#0a84a8;letter-spacing:-0.141px;">$ 2,670.00</span>
<span class="t" style="left:1739.39px;top:291.00px;font-size:12px;line-height:18px;color:#111827;-webkit-text-stroke:0.5px #111827;transform:scaleX(0.9103);transform-origin:0 0;">RFQ</span>
<span class="t" style="left:80.31px;top:323.00px;font-size:13px;line-height:19px;color:#0a84a8;-webkit-text-stroke:0.4px #0a84a8;letter-spacing:0.021px;">P00025</span>
<span class="t" style="left:193.06px;top:323.00px;font-size:13px;line-height:19px;color:#0a84a8;letter-spacing:-0.136px;">Azure Interior, Colleen Diaz</span>
<span class="t" style="left:431.71px;top:323.00px;font-size:13px;line-height:19px;color:#0a84a8;letter-spacing:-0.120px;">My Company (San Francisco)</span>
<span class="t" style="left:717.32px;top:323.00px;font-size:13px;line-height:19px;color:#0a84a8;letter-spacing:0.232px;">Mitchell Admin</span>
<span class="t" style="left:931.56px;top:323.00px;font-size:13px;line-height:19px;color:#ad7a08;-webkit-text-stroke:0.5px #ad7a08;letter-spacing:-0.104px;">Today</span>
<span class="t" style="left:1664.56px;top:323.00px;font-size:13px;line-height:19px;color:#0a84a8;letter-spacing:-0.142px;">$ 6,121.50</span>
<span class="t" style="left:1739.39px;top:324.00px;font-size:12px;line-height:18px;color:#111827;-webkit-text-stroke:0.5px #111827;transform:scaleX(0.9103);transform-origin:0 0;">RFQ</span>
<span class="t" style="left:80.37px;top:356.00px;font-size:13px;line-height:19px;color:#0a84a8;-webkit-text-stroke:0.4px #0a84a8;letter-spacing:0.022px;">P00024</span>
<span class="t" style="left:193.06px;top:356.00px;font-size:13px;line-height:19px;color:#0a84a8;letter-spacing:-0.136px;">Azure Interior, Colleen Diaz</span>
<span class="t" style="left:431.71px;top:356.00px;font-size:13px;line-height:19px;color:#0a84a8;letter-spacing:-0.120px;">My Company (San Francisco)</span>
<span class="t" style="left:717.32px;top:356.00px;font-size:13px;line-height:19px;color:#0a84a8;letter-spacing:0.232px;">Mitchell Admin</span>
<span class="t" style="left:931.56px;top:356.00px;font-size:13px;line-height:19px;color:#ad7a08;-webkit-text-stroke:0.5px #ad7a08;letter-spacing:-0.104px;">Today</span>
<span class="t" style="left:1664.56px;top:356.00px;font-size:13px;line-height:19px;color:#0a84a8;letter-spacing:-0.142px;">$ 6,121.50</span>
<span class="t" style="left:1739.39px;top:357.00px;font-size:12px;line-height:18px;color:#111827;-webkit-text-stroke:0.5px #111827;transform:scaleX(0.9103);transform-origin:0 0;">RFQ</span>
<span class="t" style="left:80.24px;top:389.00px;font-size:13px;line-height:19px;color:#0a84a8;-webkit-text-stroke:0.4px #0a84a8;letter-spacing:0.099px;">P00023</span>
<span class="t" style="left:193.06px;top:389.00px;font-size:13px;line-height:19px;color:#0a84a8;letter-spacing:-0.136px;">Azure Interior, Colleen Diaz</span>
<span class="t" style="left:431.71px;top:389.00px;font-size:13px;line-height:19px;color:#0a84a8;letter-spacing:-0.120px;">My Company (San Francisco)</span>
<span class="t" style="left:717.32px;top:389.00px;font-size:13px;line-height:19px;color:#0a84a8;letter-spacing:0.232px;">Mitchell Admin</span>
<span class="t" style="left:931.56px;top:389.00px;font-size:13px;line-height:19px;color:#ad7a08;-webkit-text-stroke:0.5px #ad7a08;letter-spacing:-0.104px;">Today</span>
<span class="t" style="left:1664.56px;top:389.00px;font-size:13px;line-height:19px;color:#0a84a8;letter-spacing:-0.142px;">$ 6,121.50</span>
<span class="t" style="left:1739.39px;top:390.00px;font-size:12px;line-height:18px;color:#111827;-webkit-text-stroke:0.5px #111827;transform:scaleX(0.9103);transform-origin:0 0;">RFQ</span>
<span class="t" style="left:80.28px;top:422.00px;font-size:13px;line-height:19px;color:#0a84a8;-webkit-text-stroke:0.4px #0a84a8;letter-spacing:0.100px;">P00022</span>
<span class="t" style="left:193.06px;top:422.00px;font-size:13px;line-height:19px;color:#0a84a8;letter-spacing:-0.136px;">Azure Interior, Colleen Diaz</span>
<span class="t" style="left:431.71px;top:422.00px;font-size:13px;line-height:19px;color:#0a84a8;letter-spacing:-0.120px;">My Company (San Francisco)</span>
<span class="t" style="left:717.32px;top:422.00px;font-size:13px;line-height:19px;color:#0a84a8;letter-spacing:0.232px;">Mitchell Admin</span>
<span class="t" style="left:931.56px;top:422.00px;font-size:13px;line-height:19px;color:#ad7a08;-webkit-text-stroke:0.5px #ad7a08;letter-spacing:-0.104px;">Today</span>
<span class="t" style="left:1664.56px;top:422.00px;font-size:13px;line-height:19px;color:#0a84a8;letter-spacing:-0.142px;">$ 6,121.50</span>
<span class="t" style="left:1739.39px;top:423.00px;font-size:12px;line-height:18px;color:#111827;-webkit-text-stroke:0.5px #111827;transform:scaleX(0.9103);transform-origin:0 0;">RFQ</span>
<span class="t" style="left:80.30px;top:456.00px;font-size:13px;line-height:19px;color:#0a84a8;-webkit-text-stroke:0.4px #0a84a8;letter-spacing:0.095px;">P00021</span>
<span class="t" style="left:193.06px;top:456.00px;font-size:13px;line-height:19px;color:#0a84a8;letter-spacing:-0.136px;">Azure Interior, Colleen Diaz</span>
<span class="t" style="left:431.71px;top:456.00px;font-size:13px;line-height:19px;color:#0a84a8;letter-spacing:-0.120px;">My Company (San Francisco)</span>
<span class="t" style="left:717.32px;top:456.00px;font-size:13px;line-height:19px;color:#0a84a8;letter-spacing:0.232px;">Mitchell Admin</span>
<span class="t" style="left:931.56px;top:456.00px;font-size:13px;line-height:19px;color:#ad7a08;-webkit-text-stroke:0.5px #ad7a08;letter-spacing:-0.104px;">Today</span>
<span class="t" style="left:1664.56px;top:456.00px;font-size:13px;line-height:19px;color:#0a84a8;letter-spacing:-0.142px;">$ 6,121.50</span>
<span class="t" style="left:1739.39px;top:457.00px;font-size:12px;line-height:18px;color:#111827;-webkit-text-stroke:0.5px #111827;transform:scaleX(0.9103);transform-origin:0 0;">RFQ</span>
<span class="t" style="left:80.35px;top:489.00px;font-size:13px;line-height:19px;color:#0a84a8;-webkit-text-stroke:0.4px #0a84a8;letter-spacing:0.084px;">P00020</span>
<span class="t" style="left:193.06px;top:489.00px;font-size:13px;line-height:19px;color:#0a84a8;letter-spacing:-0.136px;">Azure Interior, Colleen Diaz</span>
<span class="t" style="left:431.71px;top:489.00px;font-size:13px;line-height:19px;color:#0a84a8;letter-spacing:-0.120px;">My Company (San Francisco)</span>
<span class="t" style="left:717.32px;top:489.00px;font-size:13px;line-height:19px;color:#0a84a8;letter-spacing:0.232px;">Mitchell Admin</span>
<span class="t" style="left:931.56px;top:489.00px;font-size:13px;line-height:19px;color:#ad7a08;-webkit-text-stroke:0.5px #ad7a08;letter-spacing:-0.104px;">Today</span>
<span class="t" style="left:1664.56px;top:489.00px;font-size:13px;line-height:19px;color:#0a84a8;letter-spacing:-0.142px;">$ 6,121.50</span>
<span class="t" style="left:1739.39px;top:490.00px;font-size:12px;line-height:18px;color:#111827;-webkit-text-stroke:0.5px #111827;transform:scaleX(0.9103);transform-origin:0 0;">RFQ</span>
<span class="t" style="left:80.22px;top:522.00px;font-size:13px;line-height:19px;color:#0a84a8;-webkit-text-stroke:0.4px #0a84a8;letter-spacing:0.137px;">P00019</span>
<span class="t" style="left:193.06px;top:522.00px;font-size:13px;line-height:19px;color:#0a84a8;letter-spacing:-0.136px;">Azure Interior, Colleen Diaz</span>
<span class="t" style="left:431.71px;top:522.00px;font-size:13px;line-height:19px;color:#0a84a8;letter-spacing:-0.120px;">My Company (San Francisco)</span>
<span class="t" style="left:717.32px;top:522.00px;font-size:13px;line-height:19px;color:#0a84a8;letter-spacing:0.232px;">Mitchell Admin</span>
<span class="t" style="left:931.56px;top:522.00px;font-size:13px;line-height:19px;color:#ad7a08;-webkit-text-stroke:0.5px #ad7a08;letter-spacing:-0.104px;">Today</span>
<span class="t" style="left:1664.56px;top:522.00px;font-size:13px;line-height:19px;color:#0a84a8;letter-spacing:-0.142px;">$ 6,121.50</span>
<span class="t" style="left:1739.39px;top:523.00px;font-size:12px;line-height:18px;color:#111827;-webkit-text-stroke:0.5px #111827;transform:scaleX(0.9103);transform-origin:0 0;">RFQ</span>
<span class="t" style="left:80.26px;top:555.00px;font-size:13px;line-height:19px;color:#0a84a8;-webkit-text-stroke:0.4px #0a84a8;letter-spacing:0.122px;">P00018</span>
<span class="t" style="left:192.26px;top:555.00px;font-size:13px;line-height:19px;color:#0a84a8;letter-spacing:0.105px;">Deco Addict</span>
<span class="t" style="left:431.71px;top:555.00px;font-size:13px;line-height:19px;color:#0a84a8;letter-spacing:-0.120px;">My Company (San Francisco)</span>
<span class="t" style="left:717.32px;top:555.00px;font-size:13px;line-height:19px;color:#0a84a8;letter-spacing:0.232px;">Mitchell Admin</span>
<span class="t" style="left:931.56px;top:555.00px;font-size:13px;line-height:19px;color:#ad7a08;-webkit-text-stroke:0.5px #ad7a08;letter-spacing:-0.104px;">Today</span>
<span class="t" style="left:1657.17px;top:555.00px;font-size:13px;line-height:19px;color:#0a84a8;letter-spacing:-0.112px;">$ 14,818.00</span>
<span class="t" style="left:1739.39px;top:556.00px;font-size:12px;line-height:18px;color:#111827;-webkit-text-stroke:0.5px #111827;transform:scaleX(0.9103);transform-origin:0 0;">RFQ</span>
<span class="t" style="left:80.20px;top:588.00px;font-size:13px;line-height:19px;color:#0a84a8;-webkit-text-stroke:0.4px #0a84a8;letter-spacing:0.133px;">P00017</span>
<span class="t" style="left:193.06px;top:588.00px;font-size:13px;line-height:19px;color:#0a84a8;letter-spacing:-0.136px;">Azure Interior, Colleen Diaz</span>
<span class="t" style="left:431.71px;top:588.00px;font-size:13px;line-height:19px;color:#0a84a8;letter-spacing:-0.120px;">My Company (San Francisco)</span>
<span class="t" style="left:717.32px;top:588.00px;font-size:13px;line-height:19px;color:#0a84a8;letter-spacing:0.232px;">Mitchell Admin</span>
<span class="t" style="left:931.56px;top:588.00px;font-size:13px;line-height:19px;color:#ad7a08;-webkit-text-stroke:0.5px #ad7a08;letter-spacing:-0.104px;">Today</span>
<span class="t" style="left:1664.56px;top:588.00px;font-size:13px;line-height:19px;color:#0a84a8;letter-spacing:-0.142px;">$ 6,121.50</span>
<span class="t" style="left:1739.39px;top:589.00px;font-size:12px;line-height:18px;color:#111827;-webkit-text-stroke:0.5px #111827;transform:scaleX(0.9103);transform-origin:0 0;">RFQ</span>
<span class="t" style="left:80.30px;top:621.00px;font-size:13px;line-height:19px;color:#0a84a8;-webkit-text-stroke:0.4px #0a84a8;letter-spacing:0.132px;">P00016</span>
<span class="t" style="left:193.16px;top:621.00px;font-size:13px;line-height:19px;color:#0a84a8;letter-spacing:-0.195px;">Wood Corner</span>
<span class="t" style="left:431.71px;top:621.00px;font-size:13px;line-height:19px;color:#0a84a8;letter-spacing:-0.120px;">My Company (San Francisco)</span>
<span class="t" style="left:717.32px;top:621.00px;font-size:13px;line-height:19px;color:#0a84a8;letter-spacing:0.232px;">Mitchell Admin</span>
<span class="t" style="left:931.56px;top:621.00px;font-size:13px;line-height:19px;color:#ad7a08;-webkit-text-stroke:0.5px #ad7a08;letter-spacing:-0.104px;">Today</span>
<span class="t" style="left:1664.54px;top:621.00px;font-size:13px;line-height:19px;color:#0a84a8;letter-spacing:-0.141px;">$ 1,335.00</span>
<span class="t" style="left:1739.39px;top:622.00px;font-size:12px;line-height:18px;color:#111827;-webkit-text-stroke:0.5px #111827;transform:scaleX(0.9103);transform-origin:0 0;">RFQ</span>
<span class="t" style="left:80.50px;top:654.00px;font-size:13px;line-height:19px;color:#0a84a8;-webkit-text-stroke:0.4px #0a84a8;letter-spacing:-0.013px;">P00015</span>
<span class="t" style="left:193.16px;top:654.00px;font-size:13px;line-height:19px;color:#0a84a8;letter-spacing:-0.195px;">Wood Corner</span>
<span class="t" style="left:431.71px;top:654.00px;font-size:13px;line-height:19px;color:#0a84a8;letter-spacing:-0.120px;">My Company (San Francisco)</span>
<span class="t" style="left:717.32px;top:654.00px;font-size:13px;line-height:19px;color:#0a84a8;letter-spacing:0.232px;">Mitchell Admin</span>
<span class="t" style="left:931.56px;top:654.00px;font-size:13px;line-height:19px;color:#ad7a08;-webkit-text-stroke:0.5px #ad7a08;letter-spacing:-0.104px;">Today</span>
<span class="t" style="left:1664.54px;top:654.00px;font-size:13px;line-height:19px;color:#0a84a8;letter-spacing:-0.141px;">$ 1,335.00</span>
<span class="t" style="left:1739.39px;top:655.00px;font-size:12px;line-height:18px;color:#111827;-webkit-text-stroke:0.5px #111827;transform:scaleX(0.9103);transform-origin:0 0;">RFQ</span>
<span class="t" style="left:80.50px;top:687.00px;font-size:13px;line-height:19px;color:#0a84a8;-webkit-text-stroke:0.4px #0a84a8;letter-spacing:-0.055px;">P00014</span>
<span class="t" style="left:193.16px;top:687.00px;font-size:13px;line-height:19px;color:#0a84a8;letter-spacing:-0.195px;">Wood Corner</span>
<span class="t" style="left:431.71px;top:687.00px;font-size:13px;line-height:19px;color:#0a84a8;letter-spacing:-0.120px;">My Company (San Francisco)</span>
<span class="t" style="left:717.32px;top:687.00px;font-size:13px;line-height:19px;color:#0a84a8;letter-spacing:0.232px;">Mitchell Admin</span>
<span class="t" style="left:931.56px;top:687.00px;font-size:13px;line-height:19px;color:#ad7a08;-webkit-text-stroke:0.5px #ad7a08;letter-spacing:-0.104px;">Today</span>
<span class="t" style="left:1664.54px;top:687.00px;font-size:13px;line-height:19px;color:#0a84a8;letter-spacing:-0.141px;">$ 1,335.00</span>
<span class="t" style="left:1739.39px;top:688.00px;font-size:12px;line-height:18px;color:#111827;-webkit-text-stroke:0.5px #111827;transform:scaleX(0.9103);transform-origin:0 0;">RFQ</span>
<span class="t" style="left:80.66px;top:720.00px;font-size:13px;line-height:19px;color:#6b7280;letter-spacing:0.070px;">P00013</span>
<span class="t" style="left:193.16px;top:720.00px;font-size:13px;line-height:19px;color:#6b7280;letter-spacing:-0.195px;">Wood Corner</span>
<span class="t" style="left:431.71px;top:720.00px;font-size:13px;line-height:19px;color:#6b7280;letter-spacing:-0.120px;">My Company (San Francisco)</span>
<span class="t" style="left:717.32px;top:720.00px;font-size:13px;line-height:19px;color:#6b7280;letter-spacing:0.232px;">Mitchell Admin</span>
<span class="t" style="left:1664.54px;top:720.00px;font-size:13px;line-height:19px;color:#6b7280;letter-spacing:-0.141px;">$ 1,335.00</span>
<span class="t" style="left:1740.51px;top:721.00px;font-size:12px;line-height:18px;color:#6b7280;-webkit-text-stroke:0.25px #6b7280;letter-spacing:-0.100px;">Cancelled</span>
<span class="t" style="left:80.67px;top:753.00px;font-size:13px;line-height:19px;color:#6b7280;letter-spacing:0.073px;">P00012</span>
<span class="t" style="left:193.16px;top:753.00px;font-size:13px;line-height:19px;color:#6b7280;letter-spacing:-0.195px;">Wood Corner</span>
<span class="t" style="left:431.71px;top:753.00px;font-size:13px;line-height:19px;color:#6b7280;letter-spacing:-0.120px;">My Company (San Francisco)</span>
<span class="t" style="left:717.32px;top:753.00px;font-size:13px;line-height:19px;color:#6b7280;letter-spacing:0.232px;">Mitchell Admin</span>
<span class="t" style="left:1664.54px;top:753.00px;font-size:13px;line-height:19px;color:#6b7280;letter-spacing:-0.141px;">$ 1,335.00</span>
<span class="t" style="left:1740.51px;top:754.00px;font-size:12px;line-height:18px;color:#6b7280;-webkit-text-stroke:0.25px #6b7280;letter-spacing:-0.100px;">Cancelled</span>
<span class="t" style="left:80.82px;top:786.00px;font-size:13px;line-height:19px;color:#374151;-webkit-text-stroke:0.4px #374151;letter-spacing:0.188px;">P00011</span>
<span class="t" style="left:192.91px;top:786.00px;font-size:13px;line-height:19px;color:#374151;letter-spacing:-0.252px;">Ready Mat</span>
<span class="t" style="left:431.71px;top:786.00px;font-size:13px;line-height:19px;color:#374151;letter-spacing:-0.120px;">My Company (San Francisco)</span>
<span class="t" style="left:717.32px;top:786.00px;font-size:13px;line-height:19px;color:#374151;letter-spacing:0.232px;">Mitchell Admin</span>
<span class="t" style="left:1664.94px;top:786.00px;font-size:13px;line-height:19px;color:#374151;letter-spacing:-0.186px;">$ 5,736.00</span>
<span class="t" style="left:1739.97px;top:787.00px;font-size:12px;line-height:18px;color:#111827;-webkit-text-stroke:0.5px #111827;letter-spacing:-0.142px;">Purchase Order</span>
<span class="t" style="left:80.91px;top:819.00px;font-size:13px;line-height:19px;color:#374151;-webkit-text-stroke:0.4px #374151;letter-spacing:-0.061px;">P00010</span>
<span class="t" style="left:193.72px;top:819.00px;font-size:13px;line-height:19px;color:#374151;letter-spacing:-0.087px;">Azure Interior</span>
<span class="t" style="left:431.71px;top:819.00px;font-size:13px;line-height:19px;color:#374151;letter-spacing:-0.120px;">My Company (San Francisco)</span>
<span class="t" style="left:717.32px;top:819.00px;font-size:13px;line-height:19px;color:#374151;letter-spacing:0.232px;">Mitchell Admin</span>
<span class="t" style="left:1664.95px;top:819.00px;font-size:13px;line-height:19px;color:#374151;letter-spacing:-0.187px;">$ 2,505.00</span>
<span class="t" style="left:1739.97px;top:820.00px;font-size:12px;line-height:18px;color:#111827;-webkit-text-stroke:0.5px #111827;letter-spacing:-0.142px;">Purchase Order</span>
<span class="t" style="left:80.84px;top:852.00px;font-size:13px;line-height:19px;color:#374151;-webkit-text-stroke:0.4px #374151;letter-spacing:-0.093px;">P00009</span>
<span class="t" style="left:193.21px;top:852.00px;font-size:13px;line-height:19px;color:#374151;letter-spacing:-0.122px;">Gemini Furniture</span>
<span class="t" style="left:431.71px;top:852.00px;font-size:13px;line-height:19px;color:#374151;letter-spacing:-0.120px;">My Company (San Francisco)</span>
<span class="t" style="left:717.32px;top:852.00px;font-size:13px;line-height:19px;color:#374151;letter-spacing:0.232px;">Mitchell Admin</span>
<span class="t" style="left:1657.52px;top:852.00px;font-size:13px;line-height:19px;color:#374151;letter-spacing:-0.148px;">$ 12,500.00</span>
<span class="t" style="left:1739.97px;top:853.00px;font-size:12px;line-height:18px;color:#111827;-webkit-text-stroke:0.5px #111827;letter-spacing:-0.142px;">Purchase Order</span>
</body></html>
